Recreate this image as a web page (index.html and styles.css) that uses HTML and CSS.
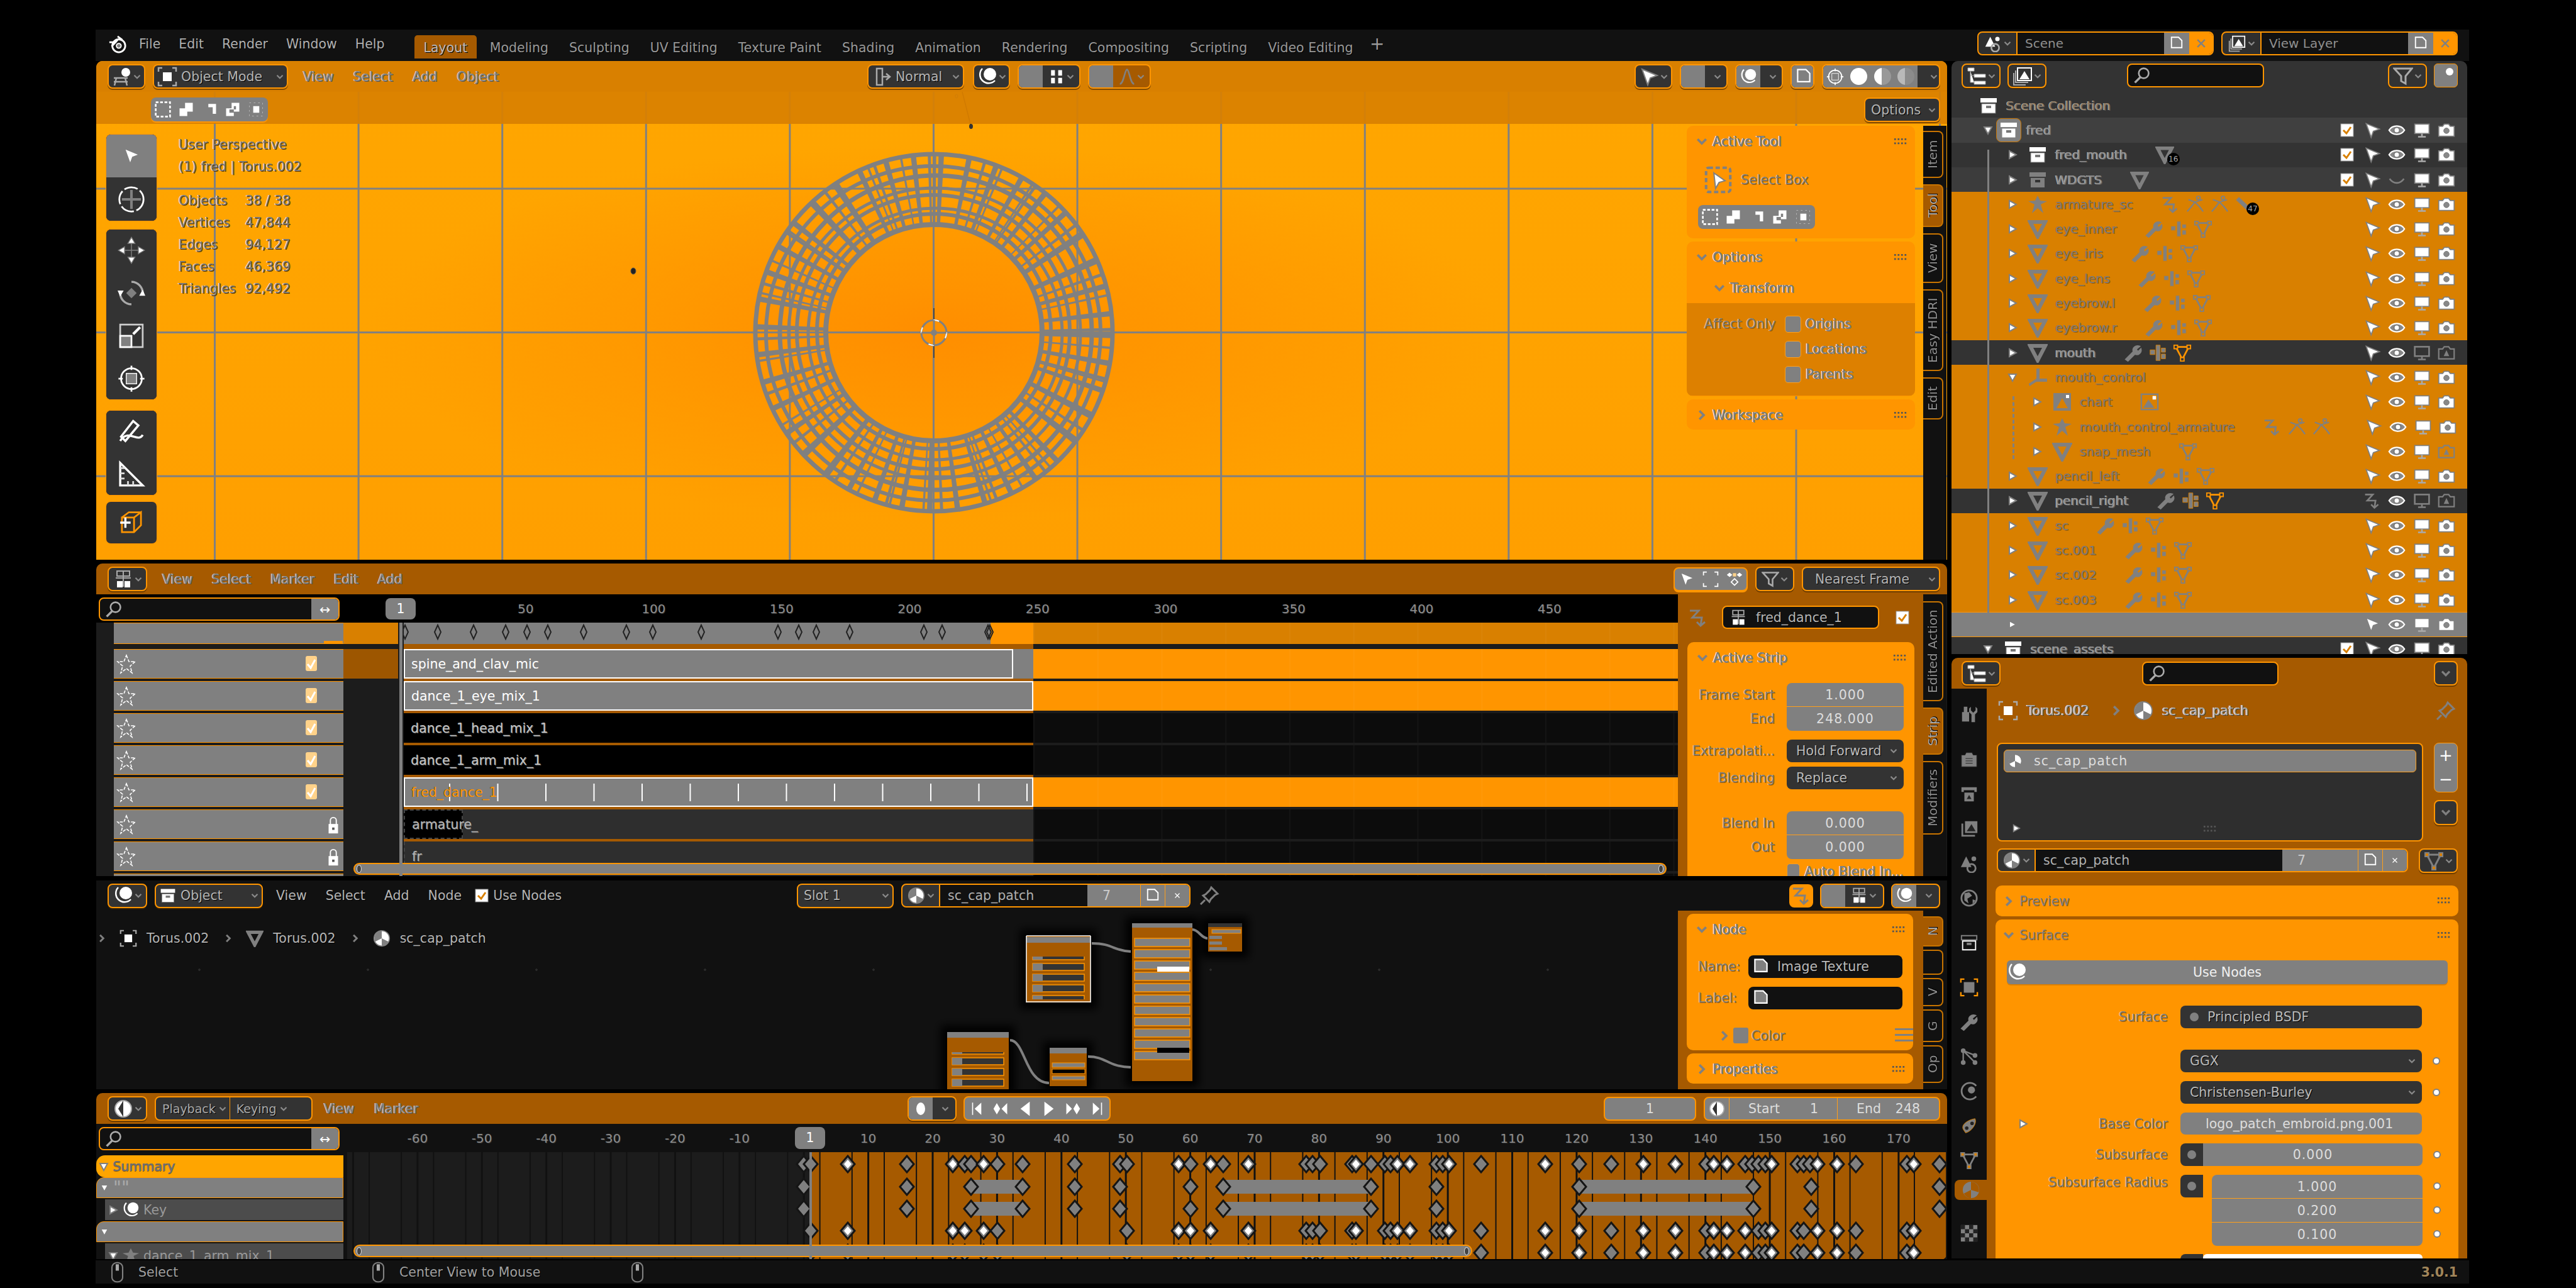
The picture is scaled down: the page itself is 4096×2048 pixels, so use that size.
FILE: index.html
```html
<!DOCTYPE html>
<html lang="en">
<head>
<meta charset="utf-8">
<title>Blender 3.0.1</title>
<link rel="stylesheet" href="styles.css">
</head>
<body>
<svg class="defs" width="0" height="0">
  <defs>
    <symbol id="logo" viewBox="0 0 32 32"><circle cx="18" cy="19" r="11" fill="none" stroke="#fff" stroke-width="3"/><circle cx="18" cy="19" r="4" fill="#808080" stroke="#fff" stroke-width="2"/><path d="M2 13H14M6 20L16 9M16 3L24 9" stroke="#fff" stroke-width="3" fill="none"/></symbol>
    <symbol id="v" viewBox="0 0 16 16"><path d="M2 5L8 11L14 5" fill="none" stroke="#8a8a8a" stroke-width="3"/></symbol>
    <symbol id="chev" viewBox="0 0 24 24"><path d="M3 7L12 16L21 7" fill="none" stroke="#808080" stroke-width="5"/></symbol>
    <symbol id="chevr" viewBox="0 0 24 24"><path d="M7 3L16 12L7 21" fill="none" stroke="#808080" stroke-width="5"/></symbol>
    <symbol id="arr" viewBox="0 0 16 16"><path d="M3 2L14 8L3 14Z" fill="#fff" stroke="#808080" stroke-width="2"/></symbol>
    <symbol id="arrd" viewBox="0 0 16 16"><path d="M2 3L14 3L8 14Z" fill="#fff" stroke="#808080" stroke-width="2"/></symbol>
    <symbol id="sel" viewBox="0 0 32 32"><path d="M5 4L29 14L18 18L14 29Z" fill="#fff" stroke="#808080" stroke-width="2"/></symbol>
    <symbol id="selbox" viewBox="0 0 32 32"><rect x="2" y="2" width="28" height="28" rx="3" fill="none" stroke="#808080" stroke-width="3" stroke-dasharray="5 3"/><path d="M11 8L24 17L17 19L13 26Z" fill="#fff" stroke="#808080" stroke-width="1.5"/></symbol>
    <symbol id="eye" viewBox="0 0 32 32"><path d="M2 16C8 6 24 6 30 16C24 26 8 26 2 16Z" fill="#888" stroke="#fff" stroke-width="2.5"/><circle cx="16" cy="16" r="5" fill="#fff" stroke="#777" stroke-width="2"/></symbol>
    <symbol id="eyec" viewBox="0 0 32 32"><path d="M3 14C10 24 22 24 29 14" fill="none" stroke="#808080" stroke-width="3"/></symbol>
    <symbol id="mon" viewBox="0 0 32 32"><rect x="3" y="5" width="26" height="17" fill="#fff" stroke="#808080" stroke-width="2"/><path d="M16 22V27M9 28H23" stroke="#aaa" stroke-width="3"/></symbol>
    <symbol id="mond" viewBox="0 0 32 32"><rect x="3" y="5" width="26" height="17" fill="#333" stroke="#808080" stroke-width="3"/><path d="M16 22V27M9 28H23" stroke="#808080" stroke-width="3"/></symbol>
    <symbol id="cam" viewBox="0 0 32 32"><path d="M2 9H9L12 5H20L23 9H30V27H2Z" fill="#fff" stroke="#808080" stroke-width="2"/><circle cx="16" cy="17" r="5" fill="#888" stroke="#777"/></symbol>
    <symbol id="camd" viewBox="0 0 32 32"><path d="M2 9H9L12 5H20L23 9H30V27H2Z" fill="none" stroke="#808080" stroke-width="2.5"/><path d="M16 11L21 22H11Z" fill="#808080"/></symbol>
    <symbol id="chk" viewBox="0 0 24 24"><rect x="2" y="2" width="20" height="20" fill="#fff" stroke="#999"/><path d="M6 12L11 17L18 7" fill="none" stroke="#d98000" stroke-width="3"/></symbol>
    <symbol id="chk2" viewBox="0 0 18 24"><rect x="0" y="0" width="18" height="24" rx="3" fill="#ffd28a"/><path d="M3 13L8 19L15 6" fill="none" stroke="#fff" stroke-width="3"/></symbol>
    <symbol id="coll" viewBox="0 0 32 32"><rect x="3" y="4" width="26" height="7" fill="#fff"/><rect x="5" y="13" width="22" height="15" fill="#fff" stroke="#808080"/><rect x="12" y="16" width="8" height="4" fill="#777"/></symbol>
    <symbol id="collg" viewBox="0 0 32 32"><rect x="3" y="4" width="26" height="7" fill="#808080"/><rect x="5" y="13" width="22" height="15" fill="#808080"/><rect x="12" y="16" width="8" height="4" fill="#333"/></symbol>
    <symbol id="tri" viewBox="0 0 32 32"><path d="M4 5H28L16 28Z" fill="none" stroke="#808080" stroke-width="6"/></symbol>
    <symbol id="wr" viewBox="0 0 32 32"><path d="M3 27L16 14C14 8 20 2 27 5L21 10L24 14L29 9C31 16 24 21 19 18L7 30Z" fill="#808080" stroke="#808080" stroke-width="2"/></symbol>
    <symbol id="blk" viewBox="0 0 32 32"><path d="M3 11H11V19H3ZM13 3H20V29H13ZM22 8H29V15H22ZM22 18H29V26H22Z" fill="#808080" stroke="#d98000"/></symbol>
    <symbol id="md" viewBox="0 0 32 32"><path d="M5 6H27L16 27Z" fill="none" stroke="#808080" stroke-width="3"/><path d="M2 3H8V9H2ZM24 3H30V9H24ZM13 24H19V30H13Z" fill="#d98000" stroke="#808080" stroke-width="2"/></symbol>
    <symbol id="mdo" viewBox="0 0 32 32"><path d="M5 6H27L16 27Z" fill="none" stroke="#ff9500" stroke-width="3"/><path d="M2 3H8V9H2ZM24 3H30V9H24ZM13 24H19V30H13Z" fill="#333" stroke="#ff9500" stroke-width="2"/></symbol>
    <symbol id="arm" viewBox="0 0 32 32"><path d="M16 2L20 10L31 11L21 16L25 30L16 22L7 30L11 16L1 11L12 10Z" fill="#808080"/></symbol>
    <symbol id="act" viewBox="0 0 32 32"><path d="M3 5H17L7 16H22L20 29M14 23L20 29L27 23" fill="none" stroke="#808080" stroke-width="3"/></symbol>
    <symbol id="run" viewBox="0 0 32 32"><circle cx="22" cy="5" r="3" fill="none" stroke="#808080" stroke-width="2"/><path d="M5 8L16 12L24 20M16 12L10 20L3 28M24 20L30 28M16 12L29 8" fill="none" stroke="#808080" stroke-width="2.5"/></symbol>
    <symbol id="bone" viewBox="0 0 32 32"><path d="M5 6L24 24" stroke="#808080" stroke-width="7"/></symbol>
    <symbol id="emp" viewBox="0 0 32 32"><path d="M14 2H19V18H31V23H14L3 30L2 26L14 18Z" fill="#808080"/></symbol>
    <symbol id="img" viewBox="0 0 32 32"><rect x="2" y="3" width="28" height="26" fill="none" stroke="#808080" stroke-width="2.5"/><path d="M5 26L14 12L24 26Z" fill="#808080"/><rect x="21" y="6" width="6" height="6" fill="#fff"/></symbol>
    <symbol id="imgf" viewBox="0 0 32 32"><rect x="2" y="2" width="28" height="28" fill="#808080"/><path d="M7 26L16 10L25 26Z" fill="#d98000"/><rect x="22" y="5" width="5" height="5" fill="#fff"/></symbol>
    <symbol id="srch" viewBox="0 0 32 32"><circle cx="19" cy="12" r="9" fill="none" stroke="#aaa" stroke-width="3"/><path d="M13 19L3 29" stroke="#aaa" stroke-width="4"/></symbol>
    <symbol id="flt" viewBox="0 0 32 32"><path d="M2 4H30L20 16V28L13 24V16Z" fill="none" stroke="#aaa" stroke-width="3"/></symbol>
    <symbol id="shade" viewBox="0 0 32 32"><path d="M8 3H17V29H8ZM17 16H29M23 11L29 16L23 21" fill="none" stroke="#aaa" stroke-width="2.5"/></symbol>
    <symbol id="scn" viewBox="0 0 32 32"><path d="M11 4L20 22H2Z" fill="#fff"/><circle cx="24" cy="8" r="4" fill="#fff"/><circle cx="20" cy="24" r="7" fill="none" stroke="#aaa" stroke-width="3"/></symbol>
    <symbol id="lay" viewBox="0 0 32 32"><rect x="8" y="3" width="22" height="20" fill="#333" stroke="#fff" stroke-width="2"/><path d="M11 21L19 8L27 21Z" fill="#fff"/><path d="M5 7V26H25M2 11V30H21" fill="none" stroke="#aaa" stroke-width="2"/></symbol>
    <symbol id="doc" viewBox="0 0 32 32"><path d="M5 3H20L27 10V25H5Z" fill="#808080" stroke="#fff" stroke-width="2.5"/></symbol>
    <symbol id="x" viewBox="0 0 24 24"><path d="M5 5L19 19M19 5L5 19" stroke="#808080" stroke-width="3"/></symbol>
    <symbol id="xw" viewBox="0 0 24 24"><path d="M5 5L19 19M19 5L5 19" stroke="#fff" stroke-width="2.5"/></symbol>
    <symbol id="oltree" viewBox="0 0 32 32"><path d="M2 3H12V8H2ZM12 13H30V18H12ZM12 24H30V29H12ZM6 8V26H12M6 15H12" fill="#fff" stroke="#aaa"/></symbol>
    <symbol id="sphere" viewBox="0 0 32 32"><circle cx="16" cy="16" r="14" fill="#fff" stroke="#808080" stroke-width="2"/><path d="M16 2A14 14 0 0 0 4 22L16 16ZM16 16L28 22A14 14 0 0 1 16 30Z" fill="#808080"/></symbol>
    <symbol id="objm" viewBox="0 0 32 32"><path d="M2 8V2H8M24 2H30V8M30 24V30H24M8 30H2V24" fill="none" stroke="#aaa" stroke-width="2.5"/><rect x="9" y="9" width="14" height="14" fill="#fff"/></symbol>
    <symbol id="pin" viewBox="0 0 32 32"><path d="M19 3L29 13L25 15L18 22L16 26L6 16L10 14L17 7ZM9 23L2 30" fill="none" stroke="#808080" stroke-width="3"/></symbol>
    <symbol id="mouse" viewBox="0 0 24 40"><rect x="2" y="2" width="20" height="36" rx="9" fill="none" stroke="#808080" stroke-width="2.5"/><rect x="9" y="5" width="6" height="12" fill="#aaa"/></symbol>
    <symbol id="grip" viewBox="0 0 24 12"><path d="M1 0h3v3h-3zM7 0h3v3h-3zM13 0h3v3h-3zM19 0h3v3h-3zM1 7h3v3h-3zM7 7h3v3h-3zM13 7h3v3h-3zM19 7h3v3h-3z" fill="#555"/></symbol>
    <symbol id="star" viewBox="0 0 32 32"><path d="M16 2L20 12H30L22 19L25 30L16 23L7 30L10 19L2 12H12Z" fill="none" stroke="#fff" stroke-width="1.6" stroke-dasharray="5 2"/></symbol>
    <symbol id="lock" viewBox="0 0 20 32"><path d="M5 14V7A5 5 0 0 1 15 7V14" fill="none" stroke="#fff" stroke-width="2"/><rect x="2" y="13" width="16" height="16" fill="#fff"/><rect x="8" y="19" width="4" height="4" fill="#555"/></symbol>
    <symbol id="nla" viewBox="0 0 32 32"><path d="M6 3H26V11H6ZM4 14H28M16 3V28" fill="none" stroke="#aaa" stroke-width="2"/><rect x="6" y="19" width="9" height="10" fill="#fff"/><rect x="18" y="19" width="9" height="10" fill="#fff"/></symbol>
    <symbol id="tlclock" viewBox="0 0 32 32"><circle cx="16" cy="16" r="13" fill="#fff" stroke="#aaa" stroke-width="2"/><path d="M16 3L8 16L16 29Z" fill="#333"/></symbol>
    <symbol id="nodeic" viewBox="0 0 32 32"><path d="M8 3A13 13 0 1 0 28 22" fill="none" stroke="#fff" stroke-width="2.5"/><circle cx="20" cy="12" r="10" fill="#fff"/></symbol>
    <symbol id="v3d" viewBox="0 0 32 32"><circle cx="22" cy="9" r="7" fill="#fff"/><path d="M3 18H25M7 18L4 30M21 18L24 30M3 24H25" fill="none" stroke="#aaa" stroke-width="2.5"/></symbol>
    <symbol id="box" viewBox="0 0 32 32"><rect x="3" y="3" width="26" height="26" fill="none" stroke="#fff" stroke-width="3" stroke-dasharray="5 3"/></symbol>
    <symbol id="corners" viewBox="0 0 32 32"><path d="M3 9V3H9M23 3H29V9M29 23V29H23M9 29H3V23" fill="none" stroke="#fff" stroke-width="2"/></symbol>
    <symbol id="k2" viewBox="0 0 32 32"><path d="M2 8L7 4L12 8L7 12ZM20 8L25 4L30 8L25 12Z" fill="#fff"/><rect x="13" y="5" width="6" height="6" fill="#ffd28a"/><path d="M16 15L22 21L16 27L10 21Z" fill="none" stroke="#fff" stroke-width="2"/></symbol>
    <symbol id="snap4" viewBox="0 0 32 32"><path d="M6 4H13V14H6ZM19 4H26V14H19ZM6 18H13V28H6ZM19 18H26V28H19Z" fill="#fff"/></symbol>
    <symbol id="fall" viewBox="0 0 32 32"><path d="M3 29C10 29 12 3 16 3C20 3 22 29 29 29" fill="none" stroke="#808080" stroke-width="3"/></symbol>
    <symbol id="b1" viewBox="0 0 32 32"><path d="M14 4H28V20H18V28H4V14H14Z" fill="#fff"/></symbol>
    <symbol id="b2" viewBox="0 0 32 32"><path d="M14 6H28V24H22V12H14Z" fill="#fff"/></symbol>
    <symbol id="b3" viewBox="0 0 32 32"><path d="M14 4H28V20H18V28H4V14H14ZM18 10V16H10V22H18V16H22V10Z" fill="#fff" fill-rule="evenodd"/></symbol>
    <symbol id="b4" viewBox="0 0 32 32"><rect x="11" y="10" width="11" height="12" fill="#fff"/><rect x="4" y="4" width="24" height="24" fill="none" stroke="#bbb" stroke-dasharray="3 5"/></symbol>
    <symbol id="t-cur" viewBox="0 0 32 32"><circle cx="16" cy="16" r="14" fill="none" stroke="#fff" stroke-width="2" stroke-dasharray="16 3"/><path d="M16 5V27M5 16H27" stroke="#808080" stroke-width="3"/></symbol>
    <symbol id="t-mv" viewBox="0 0 32 32"><path d="M16 1L20 8H12ZM16 31L12 24H20ZM1 16L8 12V20ZM31 16L24 20V12ZM16 8V24M8 16H24" fill="#fff" stroke="#808080"/></symbol>
    <symbol id="t-rot" viewBox="0 0 32 32"><path d="M16 3A13 13 0 0 1 29 16M16 29A13 13 0 0 1 3 16" fill="none" stroke="#aaa" stroke-width="2.5"/><path d="M16 10L22 16L16 22L10 16Z" fill="#808080"/><path d="M29 12L32 19H25ZM3 20L0 13H7Z" fill="#fff"/></symbol>
    <symbol id="t-sc" viewBox="0 0 32 32"><rect x="3" y="3" width="26" height="26" fill="none" stroke="#ccc" stroke-width="2"/><rect x="3" y="16" width="13" height="13" fill="#808080" stroke="#fff" stroke-width="2"/><path d="M18 14L26 6" stroke="#fff" stroke-width="3"/></symbol>
    <symbol id="t-tf" viewBox="0 0 32 32"><circle cx="16" cy="16" r="12" fill="none" stroke="#fff" stroke-width="2"/><rect x="10" y="10" width="12" height="12" fill="#808080" stroke="#fff"/><path d="M16 1V6M16 26V31M1 16H6M26 16H31" stroke="#fff" stroke-width="2"/></symbol>
    <symbol id="t-an" viewBox="0 0 32 32"><path d="M3 27C12 12 24 30 29 20M4 22L18 4L24 9L9 27Z" fill="none" stroke="#fff" stroke-width="2.5"/></symbol>
    <symbol id="t-me" viewBox="0 0 32 32"><path d="M3 29V3L29 29Z" fill="none" stroke="#fff" stroke-width="2.5"/><path d="M3 9H8M3 15H8M3 21H8M12 29V24M18 29V24" stroke="#ddd" stroke-width="2"/></symbol>
    <symbol id="t-add" viewBox="0 0 32 32"><path d="M5 10L19 10L27 4V19L19 27H5ZM5 10L13 4H27M19 10V27" fill="none" stroke="#ff9500" stroke-width="2"/><path d="M3 16H15M9 10V22" stroke="#fff" stroke-width="2.5"/></symbol>
    <symbol id="tp1" viewBox="0 0 24 32"><path d="M3 4H5V28H3ZM21 4V28L8 16Z" fill="#fff"/></symbol>
    <symbol id="tp2" viewBox="0 0 32 32"><path d="M8 4L15 16L8 28L1 16ZM30 4V28L18 16Z" fill="#fff"/></symbol>
    <symbol id="tp3" viewBox="0 0 24 32"><path d="M21 2V30L3 16Z" fill="#fff"/></symbol>
    <symbol id="tp4" viewBox="0 0 24 32"><path d="M3 2V30L21 16Z" fill="#fff"/></symbol>
    <symbol id="tp5" viewBox="0 0 32 32"><path d="M24 4L31 16L24 28L17 16ZM2 4V28L14 16Z" fill="#fff"/></symbol>
    <symbol id="tp6" viewBox="0 0 24 32"><path d="M19 4H21V28H19ZM3 4V28L16 16Z" fill="#fff"/></symbol>
    <symbol id="p-tool" viewBox="0 0 32 32"><path d="M7 3H13V12H16V28H4V12H7ZM19 3V9L23 13L27 9V3L30 6V12L26 16V29H20V16L16 12V6Z" fill="#808080"/></symbol>
    <symbol id="p-rnd" viewBox="0 0 32 32"><path d="M3 8H9L11 4H21L23 8H29V28H3ZM10 14H22M10 18H22M10 22H22" fill="#808080" stroke="#222" stroke-width="1"/></symbol>
    <symbol id="p-out" viewBox="0 0 32 32"><path d="M3 4H29V12L25 12V9H7V12H3ZM8 13H24V28H8Z" fill="#808080"/><path d="M12 24L16 17L20 24Z" fill="#222"/></symbol>
    <symbol id="p-lay" viewBox="0 0 32 32"><path d="M9 3H30V23H9ZM6 7V26H26V29H3V7Z" fill="#808080"/><path d="M12 20L20 8L27 20Z" fill="#222"/></symbol>
    <symbol id="p-scn" viewBox="0 0 32 32"><path d="M11 4L20 22H2Z" fill="#808080"/><circle cx="24" cy="8" r="4" fill="#808080"/><circle cx="20" cy="24" r="7" fill="none" stroke="#808080" stroke-width="3"/></symbol>
    <symbol id="p-wld" viewBox="0 0 32 32"><circle cx="16" cy="16" r="13" fill="none" stroke="#808080" stroke-width="3"/><path d="M8 8L16 6L21 12L13 17L15 25L8 20ZM22 18L27 20L22 26Z" fill="#808080"/></symbol>
    <symbol id="p-col" viewBox="0 0 32 32"><path d="M3 4H29V11H3Z" fill="none" stroke="#808080" stroke-width="2"/><path d="M5 13H27V28H5Z" fill="none" stroke="#fff" stroke-width="2"/><rect x="12" y="16" width="8" height="4" fill="#808080"/></symbol>
    <symbol id="p-obj" viewBox="0 0 32 32"><path d="M2 8V2H8M24 2H30V8M30 24V30H24M8 30H2V24" fill="none" stroke="#ff9500" stroke-width="2.5"/><rect x="7" y="7" width="18" height="18" fill="#808080"/></symbol>
    <symbol id="p-part" viewBox="0 0 32 32"><path d="M6 6L26 14M6 6L6 26M6 6L26 26" stroke="#808080" stroke-width="2.5"/><circle cx="6" cy="6" r="4" fill="#808080"/><circle cx="26" cy="14" r="4" fill="#808080"/><circle cx="6" cy="26" r="4" fill="#808080"/><circle cx="26" cy="26" r="4" fill="#808080"/></symbol>
    <symbol id="p-phys" viewBox="0 0 32 32"><path d="M28 7A14 14 0 1 0 28 25" fill="none" stroke="#808080" stroke-width="3"/><circle cx="20" cy="14" r="6" fill="#808080"/></symbol>
    <symbol id="p-cons" viewBox="0 0 32 32"><path d="M6 22C2 14 14 6 26 4C30 12 20 26 10 28Z" fill="#808080" stroke="#d98000"/><circle cx="12" cy="20" r="3" fill="#222"/><circle cx="21" cy="12" r="3" fill="#222"/></symbol>
    <symbol id="p-mat" viewBox="0 0 32 32"><circle cx="16" cy="16" r="14" fill="#808080"/><path d="M16 16V2A14 14 0 0 1 29 20ZM16 16L4 22A14 14 0 0 0 16 30Z" fill="#a65a00"/></symbol>
    <symbol id="p-tex" viewBox="0 0 32 32"><rect x="2" y="2" width="28" height="28" fill="#808080"/><path d="M2 2H9V9H2ZM16 2H23V9H16ZM9 9H16V16H9ZM23 9H30V16H23ZM2 16H9V23H2ZM16 16H23V23H16ZM9 23H16V30H9ZM23 23H30V30H23Z" fill="#222"/></symbol>
    <g id="k"><path d="M0 -13L11 0L0 13L-11 0Z" fill="#808080" stroke="#151515" stroke-width="3"/></g>
    <g id="w"><path d="M0 -13L11 0L0 13L-11 0Z" fill="#808080" stroke="#151515" stroke-width="3"/><path d="M0 -7L6 0L0 7L-6 0Z" fill="#fff"/></g>
    <g id="d"><path d="M0 -11L5 0L0 11L-5 0Z" fill="none" stroke="#222" stroke-width="2"/></g>
    <g id="kr1">
      <use href="#k" x="1278"/><use href="#k" x="1289"/><use href="#w" x="1348"/><use href="#k" x="1442"/><use href="#w" x="1515"/><use href="#k" x="1534"/><use href="#k" x="1544"/><use href="#w" x="1564"/><use href="#k" x="1586"/><use href="#k" x="1626"/><use href="#k" x="1709"/><use href="#k" x="1781"/><use href="#k" x="1792"/><use href="#w" x="1874"/><use href="#k" x="1893"/><use href="#w" x="1925"/><use href="#k" x="1945"/><use href="#w" x="1985"/><use href="#k" x="2077"/><use href="#k" x="2087"/><use href="#k" x="2099"/><use href="#k" x="2150"/><use href="#w" x="2156"/><use href="#k" x="2180"/><use href="#k" x="2202"/><use href="#k" x="2211"/><use href="#w" x="2222"/><use href="#w" x="2242"/><use href="#k" x="2284"/><use href="#k" x="2294"/><use href="#w" x="2304"/><use href="#k" x="2355"/><use href="#w" x="2457"/><use href="#k" x="2511"/><use href="#k" x="2562"/><use href="#w" x="2613"/><use href="#w" x="2664"/><use href="#k" x="2713"/><use href="#w" x="2725"/><use href="#w" x="2746"/><use href="#k" x="2775"/><use href="#k" x="2786"/><use href="#k" x="2796"/><use href="#k" x="2807"/><use href="#w" x="2817"/><use href="#k" x="2858"/><use href="#k" x="2868"/><use href="#k" x="2878"/><use href="#w" x="2890"/><use href="#w" x="2921"/><use href="#k" x="2951"/><use href="#k" x="3032"/><use href="#w" x="3043"/><use href="#k" x="3084"/>
    </g>
    <g id="kr2">
      <rect x="1544" y="-11" width="82" height="22" fill="#808080"/><rect x="1945" y="-11" width="235" height="22" fill="#808080"/><rect x="2511" y="-11" width="277" height="22" fill="#808080"/>
      <use href="#k" x="1278"/><use href="#k" x="1442"/><use href="#k" x="1544"/><use href="#k" x="1626"/><use href="#k" x="1709"/><use href="#k" x="1781"/><use href="#k" x="1893"/><use href="#k" x="1945"/><use href="#k" x="2180"/><use href="#k" x="2284"/><use href="#k" x="2511"/><use href="#k" x="2788"/><use href="#k" x="2880"/><use href="#k" x="3084"/>
    </g>
    <g id="kr4">
      <use href="#k" x="1289"/><use href="#w" x="1348"/><use href="#w" x="1515"/><use href="#w" x="1534"/><use href="#w" x="1564"/><use href="#k" x="1586"/><use href="#k" x="1792"/><use href="#w" x="1874"/><use href="#w" x="1893"/><use href="#w" x="1925"/><use href="#w" x="1985"/><use href="#k" x="2077"/><use href="#k" x="2087"/><use href="#k" x="2099"/><use href="#k" x="2150"/><use href="#w" x="2156"/><use href="#k" x="2202"/><use href="#k" x="2211"/><use href="#w" x="2222"/><use href="#w" x="2242"/><use href="#k" x="2284"/><use href="#k" x="2294"/><use href="#w" x="2304"/><use href="#k" x="2355"/><use href="#w" x="2457"/><use href="#w" x="2511"/><use href="#k" x="2562"/><use href="#w" x="2613"/><use href="#w" x="2664"/><use href="#k" x="2713"/><use href="#w" x="2725"/><use href="#w" x="2746"/><use href="#w" x="2775"/><use href="#k" x="2796"/><use href="#k" x="2807"/><use href="#w" x="2817"/><use href="#k" x="2858"/><use href="#k" x="2868"/><use href="#w" x="2890"/><use href="#w" x="2921"/><use href="#k" x="2951"/><use href="#k" x="3032"/><use href="#w" x="3043"/>
    </g>
    <pattern id="bars" x="1802" y="1490" width="92" height="18" patternUnits="userSpaceOnUse"><rect x="2" y="2" width="88" height="13" fill="#808080" stroke="#ff9500" stroke-width="1.5"/></pattern>
    <pattern id="bars2" x="1640" y="1530" width="86" height="17" patternUnits="userSpaceOnUse"><rect x="2" y="2" width="82" height="11" fill="#333" stroke="#ff9500" stroke-width="1.5"/><rect x="2" y="2" width="16" height="11" fill="#808080"/></pattern>
    <pattern id="bars3" x="1512" y="1680" width="86" height="17" patternUnits="userSpaceOnUse"><rect x="2" y="2" width="82" height="11" fill="#333" stroke="#ff9500" stroke-width="1.5"/><rect x="2" y="2" width="16" height="11" fill="#808080"/></pattern>
    <filter id="blur" x="-40%" y="-40%" width="180%" height="180%"><feGaussianBlur stdDeviation="7"/></filter>
  </defs>
</svg>

<div class="app">
  <header class="topbar">
    <svg class="logo"><use href="#logo"/></svg>
    <nav class="topmenu"><span>File</span><span>Edit</span><span>Render</span><span>Window</span><span>Help</span></nav>
    <nav class="tabs">
      <span class="tab on">Layout</span><span class="tab">Modeling</span><span class="tab">Sculpting</span><span class="tab">UV Editing</span><span class="tab">Texture Paint</span><span class="tab">Shading</span><span class="tab">Animation</span><span class="tab">Rendering</span><span class="tab">Compositing</span><span class="tab">Scripting</span><span class="tab">Video Editing</span><span class="tab plus">+</span>
    </nav>
    <div class="scenes">
      <div class="idblock"><span class="id-ic"><svg class="i28"><use href="#scn"/></svg><svg class="i12"><use href="#v"/></svg></span><span class="id-name">Scene</span><span class="id-new"><svg class="i24"><use href="#doc"/></svg></span><span class="id-x"><svg class="i20"><use href="#x"/></svg></span></div>
      <div class="idblock"><span class="id-ic"><svg class="i28"><use href="#lay"/></svg><svg class="i12"><use href="#v"/></svg></span><span class="id-name">View Layer</span><span class="id-new"><svg class="i24"><use href="#doc"/></svg></span><span class="id-x"><svg class="i20"><use href="#x"/></svg></span></div>
    </div>
  </header>

  <div class="main">
    <div class="leftcol">

      <section class="viewport">
        <svg class="torus" viewBox="153 97 2942 793">
          <path d="M1530 146L1544 201" stroke="#5a3000" stroke-width="1.5"/><ellipse cx="1544" cy="201" rx="3" ry="4" fill="#333"/><ellipse cx="1007" cy="431" rx="4" ry="5" fill="#222" stroke="#555"/><ellipse cx="1521" cy="153" rx="2" ry="3" fill="none" stroke="#555"/>
          <g fill="none" stroke="#808080">
            <circle cx="1485" cy="529" r="284" stroke-width="7"/>
            <circle cx="1485" cy="529" r="172" stroke-width="8"/>
            <ellipse cx="1485" cy="527" rx="186" ry="187" stroke-width="6"/>
            <ellipse cx="1487" cy="531" rx="202" ry="200" stroke-width="5"/>
            <ellipse cx="1484" cy="528" rx="217" ry="218" stroke-width="6"/>
            <ellipse cx="1486" cy="530" rx="232" ry="231" stroke-width="5"/>
            <ellipse cx="1488" cy="529" rx="248" ry="250" stroke-width="7"/>
            <ellipse cx="1484" cy="530" rx="266" ry="266" stroke-width="6"/>
            <circle cx="1485" cy="529" r="228" stroke-width="114" stroke-dasharray="7 29"/>
            <circle cx="1485" cy="529" r="228" stroke-width="114" stroke-dasharray="4 68" stroke-dashoffset="14"/>
            <circle cx="1485" cy="529" r="228" stroke-width="114" stroke-dasharray="3 41" stroke-dashoffset="26"/>
          </g>
          <path d="M1485 490V569" stroke="#333" stroke-width="1.5"/>
          <circle cx="1485" cy="529" r="20" fill="#ff9200" stroke="#808080" stroke-width="3"/>
          <circle cx="1485" cy="529" r="20" fill="none" stroke="#fff" stroke-width="2" stroke-dasharray="9 22"/>
          <path d="M1465 529H1505M1485 509V549" stroke="#808080" stroke-width="3"/>
          <circle cx="1485" cy="529" r="5" fill="#808080"/>
        </svg>
        <div class="hdr vp-hdr">
          <div class="hdr-l hl-vp">
            <span class="btn w60"><svg class="i32"><use href="#v3d"/></svg><svg class="i12"><use href="#v"/></svg></span>
            <span class="btn w215 ml12"><svg class="i32"><use href="#objm"/></svg><span class="btxt">Object Mode</span><svg class="i12 push"><use href="#v"/></svg></span>
            <nav class="menu"><span>View</span><span>Select</span><span>Add</span><span>Object</span></nav>
          </div>
          <span class="btn w154"><svg class="i32"><use href="#shade"/></svg><span class="btxt">Normal</span><svg class="i12 push"><use href="#v"/></svg></span>
          <span class="btn w59 ml14"><svg class="i32"><use href="#nodeic"/></svg><svg class="i12"><use href="#v"/></svg></span>
          <span class="btn w100 ml12 split"><span class="g38"></span><svg class="i28"><use href="#snap4"/></svg><svg class="i12"><use href="#v"/></svg></span>
          <span class="btn w100 ml12 split rust"><span class="g38"></span><svg class="i28"><use href="#fall"/></svg><svg class="i12"><use href="#v"/></svg></span>
          <div class="hdr-r">
            <span class="btn w60"><svg class="i32"><use href="#sel"/></svg><svg class="i12"><use href="#v"/></svg></span>
            <span class="btn w76 split"><span class="g38"><svg class="i28"><use href="#act"/></svg></span><svg class="i12 mid"><use href="#v"/></svg></span>
            <span class="btn w76 split"><span class="g38"><svg class="i28"><use href="#nodeic"/></svg></span><svg class="i12 mid"><use href="#v"/></svg></span>
            <span class="btn w38 split"><span class="g38"><svg class="i28"><use href="#doc"/></svg></span></span>
            <span class="btn w188 split"><span class="g150"><svg class="i28"><use href="#t-tf"/></svg><i class="disc"></i><i class="disc half"></i><i class="disc half dim"></i></span><svg class="i12 mid"><use href="#v"/></svg></span>
          </div>
        </div>
        <div class="vp-tool">
          <span class="btn-row w186"><svg class="i28"><use href="#box"/></svg><svg class="i28"><use href="#b1"/></svg><svg class="i28"><use href="#b2"/></svg><svg class="i28"><use href="#b3"/></svg><svg class="i28"><use href="#b4"/></svg></span>
          <span class="btn w121 opt"><span class="btxt">Options</span><svg class="i12 push"><use href="#v"/></svg></span>
        </div>
        <div class="vp-body">
          <aside class="toolbar">
            <div class="tgroup g1"><span class="tool on"><svg class="i32"><use href="#sel"/></svg></span><span class="tool"><svg class="i44"><use href="#t-cur"/></svg></span></div>
            <div class="tgroup"><span class="tool"><svg class="i44"><use href="#t-mv"/></svg></span><span class="tool"><svg class="i44"><use href="#t-rot"/></svg></span><span class="tool"><svg class="i44"><use href="#t-sc"/></svg></span><span class="tool"><svg class="i44"><use href="#t-tf"/></svg></span></div>
            <div class="tgroup g2"><span class="tool"><svg class="i44"><use href="#t-an"/></svg></span><span class="tool"><svg class="i44"><use href="#t-me"/></svg></span></div>
            <div class="tgroup g3"><span class="tool"><svg class="i44"><use href="#t-add"/></svg></span></div>
          </aside>
          <div class="info">
            <p>User Perspective</p>
            <p>(1) fred | Torus.002</p>
            <dl class="stats">
              <dt>Objects</dt><dd>38 / 38</dd>
              <dt>Vertices</dt><dd>47,844</dd>
              <dt>Edges</dt><dd>94,127</dd>
              <dt>Faces</dt><dd>46,369</dd>
              <dt>Triangles</dt><dd>92,492</dd>
            </dl>
          </div>
          <div class="npanels">
            <section class="panel at">
              <h3 class="ph"><svg class="i18"><use href="#chev"/></svg><span>Active Tool</span><svg class="grip"><use href="#grip"/></svg></h3>
              <div class="tool-name"><svg class="i44"><use href="#selbox"/></svg><span class="tdark">Select Box</span></div>
              <span class="btn-row w186 ar-row"><svg class="i28"><use href="#box"/></svg><svg class="i28"><use href="#b1"/></svg><svg class="i28"><use href="#b2"/></svg><svg class="i28"><use href="#b3"/></svg><svg class="i28"><use href="#b4"/></svg></span>
            </section>
            <section class="panel op">
              <h3 class="ph"><svg class="i18"><use href="#chev"/></svg><span>Options</span><svg class="grip"><use href="#grip"/></svg></h3>
              <h4 class="ph sub"><svg class="i18"><use href="#chev"/></svg><span>Transform</span></h4>
              <div class="subbody">
                <span class="lab-aff tdark">Affect Only</span>
                <div class="checks"><label class="ck"><i></i>Origins</label><label class="ck"><i></i>Locations</label><label class="ck"><i></i>Parents</label></div>
              </div>
            </section>
            <section class="panel ws">
              <h3 class="ph"><svg class="i18"><use href="#chevr"/></svg><span>Workspace</span><svg class="grip"><use href="#grip"/></svg></h3>
            </section>
          </div>
          <div class="vtabs vt-vp"><span class="vt t75">Item</span><span class="vt t68 on">Tool</span><span class="vt t79">View</span><span class="vt t130">Easy HDRI</span><span class="vt t67">Edit</span></div>
        </div>
      </section>

      <section class="nla">
        <div class="hdr rust-h">
          <span class="btn w63"><svg class="i32"><use href="#nla"/></svg><svg class="i12"><use href="#v"/></svg></span>
          <nav class="menu m-nla"><span>View</span><span>Select</span><span>Marker</span><span>Edit</span><span>Add</span></nav>
          <div class="hdr-r">
            <span class="btn-row w118 tall"><svg class="i28"><use href="#sel"/></svg><svg class="i28"><use href="#corners"/></svg><svg class="i28"><use href="#k2"/></svg></span>
            <span class="btn w62"><svg class="i28"><use href="#flt"/></svg><svg class="i12"><use href="#v"/></svg></span>
            <span class="btn w220"><span class="btxt ctr">Nearest Frame</span><svg class="i12 push"><use href="#v"/></svg></span>
          </div>
        </div>
        <div class="nla-body">
          <div class="nla-main">
            <div class="ruler-row">
              <div class="searchbox sb-nla"><svg class="i28"><use href="#srch"/></svg><span class="sb-t">&#8596;</span></div>
              <div class="ruler rl-nla"><span>50</span><span>100</span><span>150</span><span>200</span><span>250</span><span>300</span><span>350</span><span>400</span><span>450</span></div>
              <span class="frame fr-nla">1</span>
            </div>
            <div class="tracks">
              <div class="nrow n1"><span class="chan"><i class="ch-top"></i></span><span class="pre amb"></span><div class="strip s-key">
                <svg class="kfs" viewBox="641 988 1001 34"><g transform="translate(0 1003)"><use href="#d" x="643"/><use href="#d" x="695"/><use href="#d" x="752"/><use href="#d" x="803"/><use href="#d" x="837"/><use href="#d" x="870"/><use href="#d" x="927"/><use href="#d" x="995"/><use href="#d" x="1037"/><use href="#d" x="1114"/><use href="#d" x="1236"/><use href="#d" x="1269"/><use href="#d" x="1297"/><use href="#d" x="1350"/><use href="#d" x="1468"/><use href="#d" x="1497"/><use href="#d" x="1570"/><use href="#d" x="1573"/></g></svg>
              </div><span class="rest amb"></span></div>
              <div class="nrow"><span class="chan"><svg class="i32"><use href="#star"/></svg><svg class="ch-ck"><use href="#chk2"/></svg></span><span class="pre brn"></span><div class="strip gray"><span class="sbox sb-short">spine_and_clav_mic</span></div><span class="rest orng"></span></div>
              <div class="nrow"><span class="chan"><svg class="i32"><use href="#star"/></svg><svg class="ch-ck"><use href="#chk2"/></svg></span><span class="pre"></span><div class="strip gray"><span class="sbox">dance_1_eye_mix_1</span></div><span class="rest orng"></span></div>
              <div class="nrow"><span class="chan"><svg class="i32"><use href="#star"/></svg><svg class="ch-ck"><use href="#chk2"/></svg></span><span class="pre"></span><div class="strip blk"><span class="snm">dance_1_head_mix_1</span></div><span class="rest nblk"></span></div>
              <div class="nrow"><span class="chan"><svg class="i32"><use href="#star"/></svg><svg class="ch-ck"><use href="#chk2"/></svg></span><span class="pre"></span><div class="strip blk"><span class="snm">dance_1_arm_mix_1</span></div><span class="rest nblk"></span></div>
              <div class="nrow"><span class="chan"><svg class="i32"><use href="#star"/></svg><svg class="ch-ck"><use href="#chk2"/></svg></span><span class="pre"></span><div class="strip gray"><span class="sbox ticks snm-o">fred_dance_1</span></div><span class="rest orng"></span></div>
              <div class="nrow"><span class="chan"><svg class="i32"><use href="#star"/></svg><svg class="lck"><use href="#lock"/></svg></span><span class="pre"></span><div class="strip dk"><span class="dashed">armature_</span></div><span class="rest nblk"></span></div>
              <div class="nrow"><span class="chan"><svg class="i32"><use href="#star"/></svg><svg class="lck"><use href="#lock"/></svg></span><span class="pre"></span><div class="strip dk"><span class="dashed op2">fr</span></div><span class="rest nblk"></span></div>
              <div class="nrow"><span class="chan"></span><span class="pre"></span><div class="strip dk"></div><span class="rest nblk"></span></div>
              <div class="hscroll hs-nla"><i></i><i></i></div>
              <span class="playline pl-nla"></span>
            </div>
          </div>
          <aside class="side s-nla">
            <div class="nla-side-top"><svg class="i32"><use href="#act"/></svg><span class="namefield"><svg class="i28"><use href="#nla"/></svg>fred_dance_1</span><svg class="i24 ckb"><use href="#chk"/></svg></div>
            <section class="panel strip-p">
              <h3 class="ph"><svg class="i18"><use href="#chev"/></svg><span>Active Strip</span><svg class="grip"><use href="#grip"/></svg></h3>
              <div class="frow fr-first"><span class="tdark">Frame Start</span><span class="num top">1.000</span></div>
              <div class="frow fr-next"><span class="tdark">End</span><span class="num bot">248.000</span></div>
              <div class="frow fr-gap"><span class="tdark">Extrapolati...</span><span class="dd">Hold Forward<svg class="i12 push"><use href="#v"/></svg></span></div>
              <div class="frow fr-gap2"><span class="tdark">Blending</span><span class="dd">Replace<svg class="i12 push"><use href="#v"/></svg></span></div>
              <div class="frow fr-gap3"><span class="tdark">Blend In</span><span class="num top">0.000</span></div>
              <div class="frow fr-next"><span class="tdark">Out</span><span class="num bot">0.000</span></div>
              <div class="frow fr-last"><span></span><label class="ck ck2"><i></i>Auto Blend In...</label></div>
            </section>
          </aside>
          <div class="vtabs vt-nla"><span class="vt t159">Edited Action</span><span class="vt t75 on">Strip</span><span class="vt t117">Modifiers</span></div>
        </div>
      </section>

      <section class="nodeed">
        <div class="hdr nd-hdr">
          <div class="hdr-l hl-nd">
            <span class="btn w63"><svg class="i32"><use href="#nodeic"/></svg><svg class="i12"><use href="#v"/></svg></span>
            <span class="btn w172 ml12"><svg class="i28"><use href="#coll"/></svg><span class="btxt">Object</span><svg class="i12 push"><use href="#v"/></svg></span>
            <nav class="menu bright"><span>View</span><span>Select</span><span>Add</span><span>Node</span></nav>
            <label class="usenodes"><svg class="i24"><use href="#chk"/></svg>Use Nodes</label>
          </div>
          <span class="btn w154"><span class="btxt">Slot 1</span><svg class="i12 push"><use href="#v"/></svg></span>
          <span class="matblock"><span class="mb-ic"><svg class="i28"><use href="#sphere"/></svg><svg class="i12"><use href="#v"/></svg></span><span class="mb-name">sc_cap_patch</span><span class="mb-g">7</span><span class="mb-s"><svg class="i24"><use href="#doc"/></svg></span><span class="mb-s"><svg class="i12"><use href="#xw"/></svg></span></span>
          <svg class="i32 pin"><use href="#pin"/></svg>
          <div class="hdr-r">
            <span class="snapbtn"><svg class="i32"><use href="#act"/></svg></span>
            <span class="btn w102 split"><span class="g38"></span><svg class="i28"><use href="#nla"/></svg><svg class="i12"><use href="#v"/></svg></span>
            <span class="btn w78 split"><span class="g38"><svg class="i28"><use href="#nodeic"/></svg></span><svg class="i12 mid"><use href="#v"/></svg></span>
          </div>
        </div>
        <div class="nd-body">
          <div class="nd-canvas">
            <svg class="nodes" viewBox="153 1448 2515 284">
              <g fill="#000" filter="url(#blur)"><rect x="1622" y="1478" width="122" height="126"/><rect x="1790" y="1458" width="116" height="270"/><rect x="1911" y="1458" width="74" height="65"/><rect x="1496" y="1631" width="118" height="110"/><rect x="1659" y="1656" width="79" height="80"/></g>
              <g fill="none" stroke="#808080" stroke-width="4"><path d="M1736 1500C1770 1500 1770 1512 1798 1513"/><path d="M1896 1478C1906 1478 1910 1492 1920 1492"/><path d="M1606 1654C1630 1654 1630 1722 1668 1722"/><path d="M1730 1680C1760 1680 1760 1696 1798 1697"/></g>
              <rect x="1632" y="1488" width="102" height="106" fill="#a65a00"/><rect x="1632" y="1490" width="102" height="9" fill="#808080"/><path d="M1632 1488h102M1632 1593h102M1632 1488v106M1734 1488v106" stroke="#fff" stroke-width="1.5" fill="none"/><rect x="1640" y="1521" width="86" height="68" fill="url(#bars2)"/>
              <rect x="1800" y="1468" width="96" height="251" fill="#a65a00"/><rect x="1800" y="1468" width="96" height="7" fill="#808080"/><rect x="1802" y="1490" width="92" height="198" fill="url(#bars)"/><rect x="1840" y="1537" width="51" height="8" fill="#fff"/><rect x="1840" y="1666" width="51" height="8" fill="#000"/>
              <rect x="1921" y="1468" width="54" height="45" fill="#a65a00"/><rect x="1921" y="1468" width="54" height="6" fill="#333"/><rect x="1927" y="1478" width="46" height="6" fill="#808080" stroke="#ff9500"/><rect x="1923" y="1488" width="20" height="5" fill="#808080"/><rect x="1923" y="1497" width="20" height="5" fill="#808080"/><rect x="1923" y="1506" width="28" height="5" fill="#808080"/>
              <rect x="1506" y="1641" width="98" height="91" fill="#a65a00"/><rect x="1506" y="1641" width="98" height="9" fill="#808080"/><rect x="1512" y="1673" width="86" height="58" fill="url(#bars3)"/>
              <rect x="1669" y="1666" width="59" height="61" fill="#a65a00"/><rect x="1669" y="1666" width="59" height="9" fill="#808080"/><rect x="1673" y="1690" width="52" height="7" fill="#808080" stroke="#ff9500"/><rect x="1673" y="1700" width="52" height="7" fill="#000" stroke="#ff9500"/><rect x="1673" y="1711" width="52" height="6" fill="#808080" stroke="#ff9500"/>
            </svg>
            <div class="crumbs"><svg class="i14 cr-c0"><use href="#chevr"/></svg><svg class="i28"><use href="#objm"/></svg><span>Torus.002</span><svg class="i14 cr-c"><use href="#chevr"/></svg><svg class="i28"><use href="#tri"/></svg><span>Torus.002</span><svg class="i14 cr-c"><use href="#chevr"/></svg><svg class="i28"><use href="#sphere"/></svg><span>sc_cap_patch</span></div>
          </div>
          <aside class="side s-nd">
            <section class="panel nd-p">
              <h3 class="ph"><svg class="i18"><use href="#chev"/></svg><span>Node</span><svg class="grip"><use href="#grip"/></svg></h3>
              <div class="nfield nf1"><span class="tdark">Name:</span><span class="nf-in"><svg class="i28"><use href="#doc"/></svg>Image Texture</span></div>
              <div class="nfield nf2"><span class="tdark">Label:</span><span class="nf-in"><svg class="i28"><use href="#doc"/></svg></span></div>
              <div class="nd-color"><svg class="i18"><use href="#chevr"/></svg><i class="swatch"></i><span class="tdark">Color</span><span class="lines"></span></div>
            </section>
            <section class="panel nd-p2"><h3 class="ph"><svg class="i18"><use href="#chevr"/></svg><span>Properties</span><svg class="grip"><use href="#grip"/></svg></h3></section>
          </aside>
          <div class="vtabs vt-nd"><span class="vt t48 on">N</span><span class="vt t40"></span><span class="vt t45">V</span><span class="vt t52">G</span><span class="vt t60">Op</span></div>
        </div>
      </section>

      <section class="timeline">
        <div class="hdr rust-h">
          <div class="hdr-l hl-tl">
            <span class="btn w63"><svg class="i32"><use href="#tlclock"/></svg><svg class="i12"><use href="#v"/></svg></span>
            <span class="btn-pair ml12"><span>Playback<svg class="i12"><use href="#v"/></svg></span><span>Keying<svg class="i12"><use href="#v"/></svg></span></span>
            <nav class="menu m-tl"><span>View</span><span>Marker</span></nav>
          </div>
          <div class="tl-center">
            <span class="btn w78 split"><span class="g38"><i class="rec"></i></span><svg class="i12 mid"><use href="#v"/></svg></span>
            <span class="transport"><svg class="tp"><use href="#tp1"/></svg><svg class="tp"><use href="#tp2"/></svg><svg class="tp"><use href="#tp3"/></svg><svg class="tp"><use href="#tp4"/></svg><svg class="tp"><use href="#tp5"/></svg><svg class="tp"><use href="#tp6"/></svg></span>
          </div>
          <div class="hdr-r">
            <span class="curframe">1</span>
            <span class="range"><span class="r-ic"><svg class="i28"><use href="#tlclock"/></svg></span><span class="r-f rf1">Start<b>1</b></span><span class="r-f rf2">End<b>248</b></span></span>
          </div>
        </div>
        <div class="tl-body">
          <div class="tl-left">
            <div class="searchbox sb-tl"><svg class="i28"><use href="#srch"/></svg><span class="sb-t">&#8596;</span></div>
            <div class="tch summ"><svg class="i16"><use href="#arrd"/></svg><span>Summary</span></div>
            <div class="tch grp"><svg class="i16"><use href="#arrd"/></svg><span class="q">&quot;&quot;</span></div>
            <div class="tch sub1"><svg class="i16"><use href="#arr"/></svg><svg class="i28"><use href="#nodeic"/></svg><span>Key</span></div>
            <div class="tch grp"><svg class="i16"><use href="#arrd"/></svg><svg class="i28"><use href="#run"/></svg></div>
            <div class="tch sub1 lastc"><svg class="i16"><use href="#arrd"/></svg><svg class="i28"><use href="#arm"/></svg><span>dance_1_arm_mix_1</span></div>
          </div>
          <div class="tl-right">
            <div class="ruler rl-tl"><span>-60</span><span>-50</span><span>-40</span><span>-30</span><span>-20</span><span>-10</span><span></span><span>10</span><span>20</span><span>30</span><span>40</span><span>50</span><span>60</span><span>70</span><span>80</span><span>90</span><span>100</span><span>110</span><span>120</span><span>130</span><span>140</span><span>150</span><span>160</span><span>170</span></div>
            <div class="keys">
              <svg class="keysvg" viewBox="552 1831 2544 171">
                <use href="#kr1" y="1850"/><use href="#kr2" y="1886"/><use href="#kr2" y="1921"/><use href="#kr4" y="1956"/><use href="#kr4" y="1991"/>
              </svg>
              <div class="hscroll hs-tl"><i></i><i></i></div>
              <span class="playline pl-tl"></span>
            </div>
            <span class="frame fr-tl">1</span>
          </div>
        </div>
      </section>
    </div>

    <div class="rightcol">
      <section class="outliner">
        <div class="ol-hdr">
          <span class="btn w62"><svg class="i32"><use href="#oltree"/></svg><svg class="i12"><use href="#v"/></svg></span>
          <span class="btn w62 ml11"><svg class="i32"><use href="#lay"/></svg><svg class="i12"><use href="#v"/></svg></span>
          <span class="searchbox sb-ol"><svg class="i28"><use href="#srch"/></svg></span>
          <span class="btn w62 ml-auto"><svg class="i32"><use href="#flt"/></svg><svg class="i12"><use href="#v"/></svg></span>
          <span class="newcol"><b></b></span>
        </div>
        <div class="oltree">
          <span class="treeline"></span><span class="treeline2"></span>
          <div class="row r-root"><svg class="ob"><use href="#coll"/></svg><span class="nm">Scene Collection</span></div>
          <div class="row ind0 r-fred"><svg class="ar"><use href="#arrd"/></svg><span class="actbox"><svg class="ob"><use href="#coll"/></svg></span><span class="nm">fred</span><span class="sp"></span><span class="cols"><svg class="cl i24"><use href="#chk"/></svg><svg class="cl"><use href="#sel"/></svg><svg class="cl"><use href="#eye"/></svg><svg class="cl"><use href="#mon"/></svg><svg class="cl"><use href="#cam"/></svg></span></div>
          <div class="row ind1 r-dk"><svg class="ar"><use href="#arr"/></svg><svg class="ob"><use href="#coll"/></svg><span class="nm">fred_mouth</span><svg class="st ml44"><use href="#tri"/></svg><i class="badge">16</i><span class="sp"></span><span class="cols"><svg class="cl i24"><use href="#chk"/></svg><svg class="cl"><use href="#sel"/></svg><svg class="cl"><use href="#eye"/></svg><svg class="cl"><use href="#mon"/></svg><svg class="cl"><use href="#cam"/></svg></span></div>
          <div class="row ind1 r-wd"><svg class="ar"><use href="#arr"/></svg><svg class="ob"><use href="#collg"/></svg><span class="nm">WDGTS</span><svg class="st ml44"><use href="#tri"/></svg><span class="sp"></span><span class="cols"><svg class="cl i24"><use href="#chk"/></svg><svg class="cl"><use href="#sel"/></svg><svg class="cl"><use href="#eyec"/></svg><svg class="cl"><use href="#mon"/></svg><svg class="cl"><use href="#cam"/></svg></span></div>
          <div class="row ind1 s"><svg class="ar"><use href="#arr"/></svg><svg class="ob"><use href="#arm"/></svg><span class="nm">armature_sc</span><svg class="st ml44"><use href="#act"/></svg><svg class="st"><use href="#run"/></svg><svg class="st"><use href="#run"/></svg><svg class="st"><use href="#bone"/></svg><i class="badge">47</i><span class="sp"></span><span class="cols"><i class="cl"></i><svg class="cl"><use href="#sel"/></svg><svg class="cl"><use href="#eye"/></svg><svg class="cl"><use href="#mon"/></svg><svg class="cl"><use href="#cam"/></svg></span></div>
          <div class="row ind1 s"><svg class="ar"><use href="#arr"/></svg><svg class="ob"><use href="#tri"/></svg><span class="nm">eye_inner</span><svg class="st ml44"><use href="#wr"/></svg><svg class="st"><use href="#blk"/></svg><svg class="st"><use href="#md"/></svg><span class="sp"></span><span class="cols"><i class="cl"></i><svg class="cl"><use href="#sel"/></svg><svg class="cl"><use href="#eye"/></svg><svg class="cl"><use href="#mon"/></svg><svg class="cl"><use href="#cam"/></svg></span></div>
          <div class="row ind1 s"><svg class="ar"><use href="#arr"/></svg><svg class="ob"><use href="#tri"/></svg><span class="nm">eye_iris</span><svg class="st ml44"><use href="#wr"/></svg><svg class="st"><use href="#blk"/></svg><svg class="st"><use href="#md"/></svg><span class="sp"></span><span class="cols"><i class="cl"></i><svg class="cl"><use href="#sel"/></svg><svg class="cl"><use href="#eye"/></svg><svg class="cl"><use href="#mon"/></svg><svg class="cl"><use href="#cam"/></svg></span></div>
          <div class="row ind1 s"><svg class="ar"><use href="#arr"/></svg><svg class="ob"><use href="#tri"/></svg><span class="nm">eye_lens</span><svg class="st ml44"><use href="#wr"/></svg><svg class="st"><use href="#blk"/></svg><svg class="st"><use href="#md"/></svg><span class="sp"></span><span class="cols"><i class="cl"></i><svg class="cl"><use href="#sel"/></svg><svg class="cl"><use href="#eye"/></svg><svg class="cl"><use href="#mon"/></svg><svg class="cl"><use href="#cam"/></svg></span></div>
          <div class="row ind1 s"><svg class="ar"><use href="#arr"/></svg><svg class="ob"><use href="#tri"/></svg><span class="nm">eyebrow.l</span><svg class="st ml44"><use href="#wr"/></svg><svg class="st"><use href="#blk"/></svg><svg class="st"><use href="#md"/></svg><span class="sp"></span><span class="cols"><i class="cl"></i><svg class="cl"><use href="#sel"/></svg><svg class="cl"><use href="#eye"/></svg><svg class="cl"><use href="#mon"/></svg><svg class="cl"><use href="#cam"/></svg></span></div>
          <div class="row ind1 s"><svg class="ar"><use href="#arr"/></svg><svg class="ob"><use href="#tri"/></svg><span class="nm">eyebrow.r</span><svg class="st ml44"><use href="#wr"/></svg><svg class="st"><use href="#blk"/></svg><svg class="st"><use href="#md"/></svg><span class="sp"></span><span class="cols"><i class="cl"></i><svg class="cl"><use href="#sel"/></svg><svg class="cl"><use href="#eye"/></svg><svg class="cl"><use href="#mon"/></svg><svg class="cl"><use href="#cam"/></svg></span></div>
          <div class="row ind1 r-un"><svg class="ar"><use href="#arr"/></svg><svg class="ob"><use href="#tri"/></svg><span class="nm">mouth</span><svg class="st ml44"><use href="#wr"/></svg><svg class="st"><use href="#blk"/></svg><svg class="st"><use href="#mdo"/></svg><span class="sp"></span><span class="cols"><i class="cl"></i><svg class="cl"><use href="#sel"/></svg><svg class="cl"><use href="#eye"/></svg><svg class="cl"><use href="#mond"/></svg><svg class="cl"><use href="#camd"/></svg></span></div>
          <div class="row ind1 s"><svg class="ar"><use href="#arrd"/></svg><svg class="ob"><use href="#emp"/></svg><span class="nm">mouth_control</span><span class="sp"></span><span class="cols"><i class="cl"></i><svg class="cl"><use href="#sel"/></svg><svg class="cl"><use href="#eye"/></svg><svg class="cl"><use href="#mon"/></svg><svg class="cl"><use href="#cam"/></svg></span></div>
          <div class="row ind2 s"><svg class="ar"><use href="#arr"/></svg><svg class="ob"><use href="#imgf"/></svg><span class="nm">chart</span><svg class="st ml44"><use href="#img"/></svg><span class="sp"></span><span class="cols"><i class="cl"></i><svg class="cl"><use href="#sel"/></svg><svg class="cl"><use href="#eye"/></svg><svg class="cl"><use href="#mon"/></svg><svg class="cl"><use href="#cam"/></svg></span></div>
          <div class="row ind2 s"><svg class="ar"><use href="#arr"/></svg><svg class="ob"><use href="#arm"/></svg><span class="nm">mouth_control_armature</span><svg class="st ml44"><use href="#act"/></svg><svg class="st"><use href="#run"/></svg><svg class="st"><use href="#run"/></svg><span class="sp"></span><span class="cols"><i class="cl"></i><svg class="cl"><use href="#sel"/></svg><svg class="cl"><use href="#eye"/></svg><svg class="cl"><use href="#mon"/></svg><svg class="cl"><use href="#cam"/></svg></span></div>
          <div class="row ind2 s"><svg class="ar"><use href="#arr"/></svg><svg class="ob"><use href="#tri"/></svg><span class="nm">snap_mesh</span><svg class="st ml44"><use href="#md"/></svg><span class="sp"></span><span class="cols"><i class="cl"></i><svg class="cl"><use href="#sel"/></svg><svg class="cl"><use href="#eye"/></svg><svg class="cl"><use href="#mon"/></svg><svg class="cl"><use href="#camd"/></svg></span></div>
          <div class="row ind1 s"><svg class="ar"><use href="#arr"/></svg><svg class="ob"><use href="#tri"/></svg><span class="nm">pencil_left</span><svg class="st ml44"><use href="#wr"/></svg><svg class="st"><use href="#blk"/></svg><svg class="st"><use href="#md"/></svg><span class="sp"></span><span class="cols"><i class="cl"></i><svg class="cl"><use href="#sel"/></svg><svg class="cl"><use href="#eye"/></svg><svg class="cl"><use href="#mon"/></svg><svg class="cl"><use href="#cam"/></svg></span></div>
          <div class="row ind1 r-un"><svg class="ar"><use href="#arr"/></svg><svg class="ob"><use href="#tri"/></svg><span class="nm">pencil_right</span><svg class="st ml44"><use href="#wr"/></svg><svg class="st"><use href="#blk"/></svg><svg class="st"><use href="#mdo"/></svg><span class="sp"></span><span class="cols"><i class="cl"></i><svg class="cl"><use href="#act"/></svg><svg class="cl"><use href="#eye"/></svg><svg class="cl"><use href="#mond"/></svg><svg class="cl"><use href="#camd"/></svg></span></div>
          <div class="row ind1 s"><svg class="ar"><use href="#arr"/></svg><svg class="ob"><use href="#tri"/></svg><span class="nm">sc</span><svg class="st ml44"><use href="#wr"/></svg><svg class="st"><use href="#blk"/></svg><svg class="st"><use href="#md"/></svg><span class="sp"></span><span class="cols"><i class="cl"></i><svg class="cl"><use href="#sel"/></svg><svg class="cl"><use href="#eye"/></svg><svg class="cl"><use href="#mon"/></svg><svg class="cl"><use href="#cam"/></svg></span></div>
          <div class="row ind1 s"><svg class="ar"><use href="#arr"/></svg><svg class="ob"><use href="#tri"/></svg><span class="nm">sc.001</span><svg class="st ml44"><use href="#wr"/></svg><svg class="st"><use href="#blk"/></svg><svg class="st"><use href="#md"/></svg><span class="sp"></span><span class="cols"><i class="cl"></i><svg class="cl"><use href="#sel"/></svg><svg class="cl"><use href="#eye"/></svg><svg class="cl"><use href="#mon"/></svg><svg class="cl"><use href="#cam"/></svg></span></div>
          <div class="row ind1 s"><svg class="ar"><use href="#arr"/></svg><svg class="ob"><use href="#tri"/></svg><span class="nm">sc.002</span><svg class="st ml44"><use href="#wr"/></svg><svg class="st"><use href="#blk"/></svg><svg class="st"><use href="#md"/></svg><span class="sp"></span><span class="cols"><i class="cl"></i><svg class="cl"><use href="#sel"/></svg><svg class="cl"><use href="#eye"/></svg><svg class="cl"><use href="#mon"/></svg><svg class="cl"><use href="#cam"/></svg></span></div>
          <div class="row ind1 s"><svg class="ar"><use href="#arr"/></svg><svg class="ob"><use href="#tri"/></svg><span class="nm">sc.003</span><svg class="st ml44"><use href="#wr"/></svg><svg class="st"><use href="#blk"/></svg><svg class="st"><use href="#md"/></svg><span class="sp"></span><span class="cols"><i class="cl"></i><svg class="cl"><use href="#sel"/></svg><svg class="cl"><use href="#eye"/></svg><svg class="cl"><use href="#mon"/></svg><svg class="cl"><use href="#cam"/></svg></span></div>
          <div class="row ind1 r-act"><svg class="ar"><use href="#arr"/></svg><span class="sp"></span><span class="cols"><i class="cl"></i><svg class="cl"><use href="#sel"/></svg><svg class="cl"><use href="#eye"/></svg><svg class="cl"><use href="#mon"/></svg><svg class="cl"><use href="#cam"/></svg></span></div>
          <div class="row ind0 r-dk"><svg class="ar"><use href="#arrd"/></svg><svg class="ob"><use href="#coll"/></svg><span class="nm">scene_assets</span><span class="sp"></span><span class="cols"><svg class="cl i24"><use href="#chk"/></svg><svg class="cl"><use href="#sel"/></svg><svg class="cl"><use href="#eye"/></svg><svg class="cl"><use href="#mon"/></svg><svg class="cl"><use href="#cam"/></svg></span></div>
        </div>
      </section>

      <section class="props">
        <div class="pr-hdr">
          <span class="btn w62"><svg class="i32"><use href="#oltree"/></svg><svg class="i12"><use href="#v"/></svg></span>
          <span class="searchbox sb-pr"><svg class="i28"><use href="#srch"/></svg></span>
          <span class="btn w38 ml-auto"><svg class="i16"><use href="#chev"/></svg></span>
        </div>
        <div class="pr-body">
          <aside class="pr-tabs">
            <svg class="pt pt-first"><use href="#p-tool"/></svg>
            <svg class="pt"><use href="#p-rnd"/></svg><svg class="pt"><use href="#p-out"/></svg><svg class="pt"><use href="#p-lay"/></svg><svg class="pt"><use href="#p-scn"/></svg><svg class="pt pt-gap"><use href="#p-wld"/></svg>
            <svg class="pt pt-gap"><use href="#p-col"/></svg>
            <svg class="pt"><use href="#p-obj"/></svg><svg class="pt"><use href="#wr"/></svg><svg class="pt"><use href="#p-part"/></svg><svg class="pt"><use href="#p-phys"/></svg><svg class="pt"><use href="#p-cons"/></svg><svg class="pt pt-last"><use href="#md"/></svg>
            <span class="pt-act"><svg class="pt"><use href="#p-mat"/></svg></span>
            <svg class="pt"><use href="#p-tex"/></svg>
          </aside>
          <div class="pr-main">
            <div class="pr-crumb"><svg class="i32"><use href="#objm"/></svg><span>Torus.002</span><svg class="i18 ml-c"><use href="#chevr"/></svg><svg class="i32 ml-c2"><use href="#sphere"/></svg><span>sc_cap_patch</span><svg class="i32 pr-pin"><use href="#pin"/></svg></div>
            <div class="mat-list">
              <div class="ml-box"><div class="ml-item"><svg class="i24"><use href="#sphere"/></svg>sc_cap_patch</div><svg class="ml-arr"><use href="#arr"/></svg><svg class="grip ml-grip"><use href="#grip"/></svg></div>
              <div class="ml-side"><span class="pm">+<br>&#8722;</span><span class="btn w38 ml-d"><svg class="i16"><use href="#chev"/></svg></span></div>
            </div>
            <div class="mat-sel">
              <span class="matblock mb-pr"><span class="mb-ic"><svg class="i28"><use href="#sphere"/></svg><svg class="i12"><use href="#v"/></svg></span><span class="mb-name">sc_cap_patch</span><span class="mb-g">7</span><span class="mb-s"><svg class="i24"><use href="#doc"/></svg></span><span class="mb-s"><svg class="i12"><use href="#xw"/></svg></span></span>
              <span class="btn w62"><svg class="i32"><use href="#md"/></svg><svg class="i12"><use href="#v"/></svg></span>
            </div>
            <section class="panel p-prev"><h3 class="ph"><svg class="i18"><use href="#chevr"/></svg><span>Preview</span><svg class="grip"><use href="#grip"/></svg></h3></section>
            <section class="panel p-surf">
              <h3 class="ph"><svg class="i18"><use href="#chev"/></svg><span>Surface</span><svg class="grip"><use href="#grip"/></svg></h3>
              <div class="usen"><svg class="i32"><use href="#nodeic"/></svg><span>Use Nodes</span></div>
              <div class="prow pg1"><span class="tdark">Surface</span><span class="dd w-f"><i class="dot"></i>Principled BSDF</span></div>
              <div class="prow pg2"><span></span><span class="dd w-f">GGX<svg class="i12 push"><use href="#v"/></svg></span><i class="sd"></i></div>
              <div class="prow pg3"><span></span><span class="dd w-f">Christensen-Burley<svg class="i12 push"><use href="#v"/></svg></span><i class="sd"></i></div>
              <div class="prow pg3"><svg class="i16 base-ar"><use href="#arr"/></svg><span class="tdark">Base Color</span><span class="gf">logo_patch_embroid.png.001</span></div>
              <div class="prow pg3"><span class="tdark">Subsurface</span><span class="comb"><span class="dotb"><i class="dot"></i></span><span class="numf">0.000</span></span><i class="sd"></i></div>
              <div class="prow pg3 top-al"><span class="tdark">Subsurface Radius</span><span class="comb"><span class="dotb"><i class="dot"></i></span><span class="vec"><span>1.000</span><span>0.200</span><span>0.100</span></span></span><span class="sds"><i class="sd"></i><i class="sd"></i><i class="sd"></i></span></div>
              <div class="prow pg4"><span></span><span class="comb"><span class="dotb2"></span><span class="whitebar"></span></span></div>
            </section>
          </div>
        </div>
      </section>
    </div>
  </div>

  <footer class="status">
    <svg class="ms"><use href="#mouse"/></svg><span class="st1">Select</span>
    <svg class="ms"><use href="#mouse"/></svg><span class="st2">Center View to Mouse</span>
    <svg class="ms"><use href="#mouse"/></svg>
    <span class="ver">3.0.1</span>
  </footer>
</div>
</body>
</html>
```

FILE: styles.css
```css
* { box-sizing: border-box; }
html, body { margin: 0; padding: 0; background: #000; }
body { width: 4096px; height: 2048px; overflow: hidden; font: 20.5px "DejaVu Sans", sans-serif; color: #a6a6a6; }
.defs { position: absolute; }
svg { display: block; flex: none; overflow: visible; }
p, h3, h4, dl, dd { margin: 0; font-weight: 400; font-size: inherit; }
i { font-style: normal; display: block; }
.i12 { width: 12px; height: 12px; }
.i14 { width: 14px; height: 14px; }
.i16 { width: 16px; height: 16px; }
.i18 { width: 18px; height: 18px; }
.i20 { width: 20px; height: 20px; }
.i24 { width: 24px; height: 24px; }
.i28 { width: 28px; height: 28px; }
.i32 { width: 32px; height: 32px; }
.i44 { width: 44px; height: 44px; }
.ml11 { margin-left: 11px; }
.ml12 { margin-left: 12px; }
.ml14 { margin-left: 14px; }
.ml-auto { margin-left: auto; }
.push { margin-left: auto; }
.app { margin: 47px 0 0 152px; width: 3774px; height: 1994px; display: flex; flex-direction: column; }

/* top bar */
.topbar { height: 50px; background: #111; display: flex; align-items: flex-start; }
.logo { width: 32px; height: 30px; margin: 8px 0 0 19px; }
.topmenu { display: flex; gap: 29px; margin: 11px 0 0 18px; line-height: 24px; color: #b0b0b0; text-shadow: 1px 1px 0 #000; }
.tabs { display: flex; margin: 9px 0 0 47px; height: 37px; }
.tab { padding: 8px 16.5px 0; line-height: 24px; white-space: nowrap; color: #999; text-shadow: 1px 1px 0 #000; }
.tab.on { background: #a65a00; border-radius: 5px 5px 0 0; padding: 8px 15px 0; margin-right: 4px; color: #bbb; }
.tab.plus { font-size: 28px; padding: 2px 10px 0; }
.scenes { margin-left: auto; padding: 3px 18px 0 0; display: flex; gap: 12px; }
.idblock { width: 376px; height: 38px; display: flex; border: 2px solid #ff9500; border-radius: 8px; overflow: hidden; background: #2f2f2f; }
.id-ic { width: 60px; display: flex; align-items: center; justify-content: center; gap: 3px; }
.id-name { width: 235px; background: #111; border-left: 2px solid #ff9500; display: flex; align-items: center; padding-left: 12px; font-size: 20px; color: #8f8f8f; }
.id-new { width: 40px; background: #808080; display: flex; align-items: center; justify-content: center; }
.id-x { flex: 1; background: #ff9500; display: flex; align-items: center; justify-content: center; }

/* common controls */
.hdr { height: 49px; display: flex; align-items: center; padding-left: 18px; position: relative; z-index: 1; }
.hdr-l { display: flex; align-items: center; flex: none; }
.hdr-r { margin-left: auto; display: flex; align-items: center; gap: 12px; padding-right: 11px; }
.hl-vp { width: 1208px; }
.hl-nd { width: 1096px; }
.hl-tl { width: 1272px; }
.btn { height: 39px; flex: none; border: 2px solid #ff9500; border-radius: 8px; background: #333; display: flex; align-items: center; justify-content: center; gap: 2px; overflow: hidden; box-shadow: 0 2px 0 rgba(70,40,0,.6); }
.btn:not(.split) { padding: 0 5px; }
.btxt { margin-left: 4px; white-space: nowrap; color: #b5b5b5; text-shadow: 1px 1px 0 #000; }
.btxt.ctr { margin-left: 14px; }
.w38 { width: 38px; } .w59 { width: 59px; } .w60 { width: 60px; } .w62 { width: 62px; } .w63 { width: 63px; } .w76 { width: 76px; } .w78 { width: 78px; }
.w100 { width: 100px; } .w102 { width: 102px; } .w121 { width: 121px; } .w154 { width: 154px; } .w172 { width: 172px; } .w188 { width: 188px; } .w215 { width: 215px; } .w220 { width: 220px; }
.btn.split { justify-content: flex-start; }
.g38 { width: 38px; height: 100%; background: #808080; display: flex; align-items: center; justify-content: center; flex: none; margin-right: 6px; }
.g150 { width: 150px; height: 100%; background: #808080; display: flex; align-items: center; justify-content: space-around; flex: none; margin-right: 12px; }
.rust { background: #a65a00; }
.mid { margin-left: 6px; }
.disc { width: 27px; height: 27px; border-radius: 50%; background: #fff; }
.disc.half { background: linear-gradient(90deg, #fff 45%, #999 45%); }
.disc.dim { opacity: .45; }
.btn-row { height: 38px; display: flex; align-items: center; justify-content: space-around; background: #808080; border-radius: 8px; box-shadow: 0 2px 0 #ff9500; flex: none; }
.w186 { width: 186px; }
.w118 { width: 118px; border: 2px solid #ff9500; }
.menu { display: flex; gap: 31px; margin-left: 24px; text-shadow: 1px 1px 0 #555, -1px 0 0 #ddd; color: #888; }
.m-nla { gap: 30px; }
.menu.bright { color: #b5b5b5; text-shadow: 1px 1px 0 #000; gap: 30px; margin-left: 21px; }
.m-tl { margin-left: 18px; }
.searchbox { height: 38px; background: #111; border: 2px solid #ff9500; border-radius: 8px; display: flex; align-items: center; padding-left: 8px; flex: none; overflow: hidden; position: relative; }
.sb-t { position: absolute; right: 0; top: 0; bottom: 0; width: 43px; background: #808080; color: #fff; display: flex; align-items: center; justify-content: center; }

/* viewport */
.main { flex: 1; display: flex; height: 1907px; }
.leftcol { width: 2943px; flex: none; display: flex; flex-direction: column; margin-left: 1px; }
.viewport { height: 793px; position: relative; overflow: hidden; border-radius: 10px 10px 0 0; flex: none;
  background-color: #ffa000;
  background-image:
    linear-gradient(90deg, #808080 3px, transparent 3px),
    linear-gradient(#808080 3px, transparent 3px),
    radial-gradient(ellipse 900px 300px at 1332px 432px, #ff8e00 0, rgba(255,146,0,.5) 60%, rgba(255,160,0,0) 100%),
    linear-gradient(#ffa600, #ffa400 300px, #ff9f00);
  background-size: 228.6px 100%, 100% 228.6px, 100% 100%, 100% 100%;
  background-position: 187px 0, 0 201.5px, 0 0, 0 0;
}
.torus { position: absolute; left: 0; top: 0; width: 2942px; height: 793px; }
.vp-hdr { background: #d98000; }
.vp-tool { height: 51px; padding: 9px 11px 0 87px; display: flex; justify-content: space-between; align-items: flex-start; background: rgba(217,128,0,.93); position: relative; z-index: 1; }
.opt { justify-content: space-between; }
.vp-body { height: 693px; display: flex; position: relative; z-index: 1; }
.toolbar { width: 82px; margin: 16px 0 0 15px; flex: none; display: flex; flex-direction: column; gap: 12px; }
.tgroup { border: 1px solid #ff9500; border-radius: 8px; overflow: hidden; background: #333; display: flex; flex-direction: column; gap: 2px; }
.g2 { margin-top: 4px; }
.g3 { margin-top: -3px; }
.tool { height: 66px; display: flex; align-items: center; justify-content: center; background: #333; }
.g1 .tool { height: 67.5px; }
.tool.on { background: #808080; }
.info { width: 320px; margin: 16px 0 0 34px; line-height: 35px; color: #7a7a7a; text-shadow: 1px 1px 0 #5a3500, -1px 0 0 #f2f2f2; flex: none; }
.stats { margin-top: 19px; display: grid; grid-template-columns: 106px auto; }
.npanels { margin: 3px 0 0 2078px; width: 363px; flex: none; display: flex; flex-direction: column; gap: 5px; }
.panel { background: #ff9500; border-radius: 10px; color: #7a7a7a; text-shadow: -1px 0 0 #fff, 1px 1px 0 #777; overflow: hidden; }
.ph { display: flex; align-items: center; height: 50px; padding-left: 15px; gap: 8px; font-size: 20.5px; }
.grip { width: 22px; height: 11px; margin-left: auto; margin-right: 12px; }
.tdark { color: #7d7d7d; text-shadow: 1px 1px 0 #a05a00, -1px 0 0 #ffd27a; }
.at { height: 179px; }
.tool-name { display: flex; align-items: center; gap: 14px; margin: 14px 0 0 28px; }
.ar-row { margin: 18px 0 0 18px; }
.op { height: 246px; }
.sub { padding-left: 43px; height: 49px; margin-top: -1px; }
.subbody { height: 147px; background: #dd8000; display: flex; padding: 20px 0 0 28px; gap: 18px; }
.lab-aff { width: 110px; white-space: nowrap; line-height: 26px; }
.checks { display: flex; flex-direction: column; gap: 13px; }
.ck { display: flex; align-items: center; gap: 7px; line-height: 27px; white-space: nowrap; }
.ck i { width: 26px; height: 27px; background: #808080; border: 1px solid #ff9f1a; border-radius: 5px; }
.ws { height: 48px; }
.vtabs { width: 37px; flex: none; background: #111; display: flex; flex-direction: column; gap: 10px; color: #8f8f8f; text-shadow: 1px 1px 0 #000; }
.vt { width: 32px; background: #111; border: 2px solid #c87400; border-width: 2px 0 2px 2px; border-radius: 8px 0 0 8px; writing-mode: vertical-rl; transform: rotate(180deg); display: flex; align-items: center; justify-content: center; font-size: 20px; flex: none; }
.vt.on { background: #a65a00; color: #aaa; }
.vt-vp { margin: 3px 0 0 13px; padding-top: 8px; height: 690px; }
.t40 { height: 40px; } .t45 { height: 45px; } .t48 { height: 48px; } .t52 { height: 52px; } .t60 { height: 60px; } .t67 { height: 67px; } .t68 { height: 68px; } .t75 { height: 75px; } .t79 { height: 79px; } .t117 { height: 117px; } .t130 { height: 130px; } .t159 { height: 159px; }

/* NLA */
.nla { height: 497px; margin-top: 6px; background: #1c1c1c; border-radius: 10px 10px 0 0; overflow: hidden; flex: none; }
.rust-h { background: #a65a00; }
.tall { height: 38px; }
.nla-body { height: 448px; display: flex; }
.nla-main { width: 2515px; flex: none; position: relative; }
.ruler-row { height: 45px; display: flex; background: #000; position: relative; }
.sb-nla { width: 383px; margin: 5px 0 0 4px; height: 37px; }
.ruler { display: flex; font-size: 20px; color: #8c8c8c; text-shadow: 1px 1px 0 #333; }
.ruler span { flex: none; text-align: center; }
.rl-nla { margin-left: 194px; padding-top: 11px; }
.rl-nla span { width: 203.5px; }
.frame { position: absolute; background: #808080; color: #fff; border-radius: 8px; text-align: center; z-index: 3; }
.fr-nla { left: 460px; top: 6px; width: 48px; height: 34px; line-height: 34px; }
.tracks { position: relative; height: 403px; overflow: hidden; background: linear-gradient(90deg, #1c1c1c 489px, #a65a00 489px, #a65a00 1490px, #1c1c1c 1490px); }
.nrow { height: 47px; margin-bottom: 4px; display: flex; background: transparent; }
.nrow.n1 { height: 34px; margin-bottom: 8px; }
.chan { width: 365px; margin-left: 28px; background: #808080; border: 1px solid #ff9500; border-width: 1px 0; display: flex; align-items: center; padding-left: 4px; flex: none; position: relative; }
.ch-top { width: 30px; height: 4px; margin-left: 330px; background: #ff9500; align-self: flex-end; }
.ch-ck { position: absolute; left: 305px; top: 10px; width: 18px; height: 24px; }
.lck { position: absolute; left: 339px; top: 10px; width: 20px; height: 30px; }
.pre { width: 96px; flex: none; background: #1c1c1c; }
.pre.amb { width: 87px; background: #d98000; margin-right: 9px; }
.pre.brn { width: 87px; background: #9d5600; margin-right: 9px; }
.strip { width: 1001px; flex: none; position: relative; }
.rest { flex: 1; background-image: linear-gradient(90deg, rgba(255,255,255,.03) 2px, transparent 2px); background-size: 101.75px 100%; }
.amb { background-color: #d98000; }
.orng { background-color: #ff9500; }
.nblk { background-color: #0c0c0c; }
.s-key { background: linear-gradient(90deg, #808080 933px, #ff9500 933px); }
.kfs { width: 1001px; height: 34px; }
.gray { background: #808080; }
.blk { background: #000; }
.dk { background: #2e2e2e; }
.sbox { display: flex; align-items: center; height: 100%; padding-left: 10px; color: #fff; border: 2px solid #fff; }
.sb-short { width: 969px; }
.snm { display: flex; align-items: center; height: 100%; padding-left: 11px; color: #c4c4c4; text-shadow: 1px 1px 0 #666; }
.snm-o { color: #ff9500; text-shadow: -1px 0 0 #555; background-image: linear-gradient(90deg, #fff 2px, transparent 2px); background-size: 76.5px 64%; background-repeat: repeat-x; background-position: 70px 50%; }
.dashed { display: flex; align-items: center; width: 94px; height: 100%; background: #000; padding-left: 11px; color: #b5b5b5; border: 2px dashed #444; text-shadow: 1px 1px 0 #666; }
.op2 { background: #2e2e2e; border-width: 0 0 0 2px; }
.hscroll { position: absolute; background: #808080; border: 2px solid #ff9500; border-radius: 10px; height: 19px; display: flex; justify-content: space-between; align-items: center; padding: 0 3px; z-index: 2; }
.hscroll i { width: 8px; height: 13px; border-radius: 50%; background: #444; border: 1px solid #ddd; }
.hs-nla { left: 409px; top: 382px; width: 2088px; }
.playline { position: absolute; width: 5px; background: #808080; top: 0; bottom: 0; z-index: 3; }
.pl-nla { left: 482px; }
.side { background: #a65a00; flex: none; width: 390px; }
.s-nla { padding-top: 18px; }
.nla-side-top { display: flex; align-items: center; padding-left: 16px; height: 37px; }
.namefield { width: 250px; height: 37px; margin-left: 22px; background: #111; border: 2px solid #ff9500; border-radius: 8px; display: flex; align-items: center; gap: 14px; padding-left: 10px; color: #b5b5b5; text-shadow: 1px 1px 0 #000; }
.ckb { margin-left: 25px; }
.strip-p { margin: 21px 0 0 15px; width: 361px; height: 372px; border-radius: 10px 10px 0 0; }
.frow { display: grid; grid-template-columns: 139px 186px; column-gap: 19px; align-items: center; }
.frow > .tdark { text-align: right; white-space: nowrap; }
.num { height: 38px; background: #808080; color: #ddd; text-shadow: none; display: flex; align-items: center; justify-content: center; letter-spacing: 1px; }
.num.top { border-radius: 8px 8px 0 0; border-bottom: 1px solid #ff9f1a; }
.num.bot { border-radius: 0 0 8px 8px; }
.fr-first { margin-top: 15px; }
.fr-gap { margin-top: 14px; }
.fr-gap2 { margin-top: 7px; }
.fr-gap3 { margin-top: 35px; }
.fr-last { margin-top: 7px; }
.dd { height: 36px; background: #333; border-radius: 8px; display: flex; align-items: center; padding: 0 10px 0 15px; color: #bbb; text-shadow: 1px 1px 0 #000; white-space: nowrap; }
.ck2 { color: #7a7a7a; }
.vt-nla { padding-top: 11px; height: 448px; }

/* node editor */
.nodeed { height: 332px; margin-top: 7px; background: #111; flex: none; overflow: hidden; }
.nd-hdr { height: 48px; background: #111; }
.btn.w172 { justify-content: flex-start; }
.usenodes { display: flex; align-items: center; gap: 6px; margin-left: 20px; color: #b5b5b5; text-shadow: 1px 1px 0 #000; }
.matblock { width: 460px; height: 38px; margin-left: 12px; display: flex; border: 2px solid #ff9500; border-radius: 8px; overflow: hidden; background: #333; flex: none; }
.mb-ic { width: 58px; display: flex; align-items: center; justify-content: center; gap: 3px; }
.mb-name { width: 236px; background: #111; border-left: 2px solid #ff9500; display: flex; align-items: center; padding-left: 12px; color: #b0b0b0; }
.mb-g { flex: 1; background: #808080; color: #ccc; display: flex; align-items: center; padding-left: 24px; }
.mb-s { width: 39px; background: #808080; border-left: 1px solid #ff9f1a; display: flex; align-items: center; justify-content: center; }
.pin { margin-left: 14px; }
.snapbtn { width: 38px; height: 37px; background: #ff9500; border-radius: 8px; display: flex; align-items: center; justify-content: center; }
.nd-hdr .hdr-r { gap: 11px; }
.nd-body { height: 284px; display: flex; }
.nd-canvas { width: 2515px; flex: none; position: relative; overflow: hidden; background-image: radial-gradient(circle, #2b2b2b 1.5px, transparent 2px); background-size: 268px 268px; background-position: 30px -40px; }
.nodes { position: absolute; left: 0; top: 0; width: 2515px; height: 284px; }
.crumbs { position: relative; display: flex; align-items: center; gap: 15px; margin: 30px 0 0 2px; color: #b5b5b5; text-shadow: 1px 1px 0 #000; }
.cr-c0 { margin-right: 6px; }
.cr-c { margin: 0 6px 0 9px; }
.s-nd { padding-top: 5px; }
.nd-p { margin-left: 14px; width: 360px; height: 217px; }
.nd-p2 { margin: 5px 0 0 14px; width: 360px; height: 48px; }
.nfield { display: flex; align-items: center; padding-left: 18px; }
.nfield .tdark { width: 80px; }
.nf-in { width: 245px; height: 36px; background: #111; border-radius: 8px; display: flex; align-items: center; gap: 12px; padding-left: 6px; color: #bbb; text-shadow: 1px 1px 0 #000; }
.nf1 { margin-top: 16px; }
.nf2 { margin-top: 14px; }
.nd-color { display: flex; align-items: center; margin: 29px 0 0 51px; gap: 5px; }
.swatch { width: 25px; height: 25px; background: #808080; border-radius: 3px; }
.lines { width: 30px; height: 24px; margin-left: 170px; background: repeating-linear-gradient(#808080 0 3px, transparent 3px 9px); }
.vt-nd { padding-top: 9px; height: 284px; gap: 5px; }

/* timeline */
.timeline { height: 264px; margin-top: 6px; background: #111; flex: none; border-radius: 10px 10px 0 0; overflow: hidden; }
.btn-pair { width: 251px; height: 39px; flex: none; display: flex; background: #333; border: 2px solid #ff9500; border-radius: 8px; }
.btn-pair span { display: flex; align-items: center; gap: 5px; padding: 0 5px 0 10px; white-space: nowrap; color: #aaa; text-shadow: 1px 1px 0 #000; font-size: 19px; }
.btn-pair span + span { border-left: 1px solid #ff9500; }
.tl-center { display: flex; gap: 11px; }
.transport { width: 234px; height: 39px; background: #808080; border: 2px solid #ff9500; border-radius: 8px; display: flex; justify-content: space-around; align-items: center; }
.rec { width: 14px; height: 20px; background: #fff; border-radius: 50%; margin-left: 12px; }
.g38 .rec { margin: 0; }
.tp { width: 24px; height: 26px; }
.curframe { width: 147px; height: 38px; background: #808080; border: 2px solid #ff9500; border-radius: 8px; color: #ddd; display: flex; align-items: center; justify-content: center; }
.range { width: 376px; height: 38px; display: flex; background: #808080; border: 2px solid #ff9500; border-radius: 8px; color: #ddd; }
.r-ic { width: 38px; display: flex; align-items: center; justify-content: center; flex: none; }
.r-f { display: flex; align-items: center; justify-content: space-between; border-left: 1px solid #ff9f1a; padding: 0 30px; flex: none; }
.rf1 { width: 172px; }
.rf2 { width: 162px; }
.r-f b { font-weight: 400; }
.tl-body { height: 215px; display: flex; position: relative; }
.tl-left { width: 399px; flex: none; background: #111; }
.sb-tl { width: 383px; margin: 5px 0 0 4px; height: 37px; }
.tch { display: flex; align-items: center; gap: 6px; }
.summ { height: 35px; margin-top: 8px; background: #ffa500; border-radius: 14px 0 0 14px; width: 393px; padding-left: 4px; color: #6e6e6e; text-shadow: 1px 0 0 #6e6e6e, 0 1px 0 #8a5a10; }
.grp { height: 33px; width: 393px; background: #808080; border: 1px solid #ff9500; border-radius: 12px 0 0 0; padding-left: 4px; }
.sub1 { height: 33px; width: 379px; margin: 2px 0 2px 14px; background: #4c4c4c; padding-left: 5px; color: #999; }
.q { color: #aaa; font-size: 28px; }
.lastc { height: 40px; margin-bottom: 0; }
.tl-right { flex: 1; position: relative; }
.rl-tl { height: 45px; padding: 11px 0 0 60.6px; }
.rl-tl span { width: 102.4px; }
.fr-tl { left: 712px; top: 5px; width: 48px; height: 35px; line-height: 35px; }
.keys { height: 171px; position: relative; overflow: hidden; border-radius: 0 0 10px 0;
  background-color: #1c1c1c;
  background-image:
    linear-gradient(90deg, #111 3px, transparent 3px),
    linear-gradient(90deg, #111 2px, transparent 2px),
    linear-gradient(90deg, transparent 736px, #a65a00 736px);
  background-size: 102.4px 100%, 51.2px 100%, 100% 100%;
  background-position: 8px 0, 34px 0, 0 0;
}
.keysvg { position: absolute; left: 0; top: 0; width: 2544px; height: 171px; }
.hs-tl { left: 10px; top: 147px; width: 1779px; height: 20px; }
.pl-tl { left: 735px; width: 4px; }

/* outliner */
.rightcol { width: 820px; margin-left: 7px; flex: none; display: flex; flex-direction: column; }
.outliner { height: 943px; background: #333; border-radius: 10px 10px 0 0; overflow: hidden; flex: none; }
.ol-hdr { height: 51px; display: flex; align-items: flex-start; padding: 4px 15px 0 16px; }
.sb-ol { width: 218px; margin-left: 128px; }
.newcol { width: 38px; height: 38px; margin-left: 11px; background: #808080; border: 1px solid #ff9500; border-radius: 6px; display: block; }
.newcol b { display: block; width: 12px; height: 12px; margin: 6px 0 0 18px; background: #fff; border-radius: 50%; }
.oltree { position: relative; }
.treeline { position: absolute; left: 57px; top: 90px; width: 3px; height: 736px; background: #808080; z-index: 2; }
.treeline2 { position: absolute; left: 97px; top: 482px; height: 100px; border-left: 3px dashed #808080; z-index: 2; }
.row { height: 39.3px; display: flex; align-items: center; color: #8a8a8a; text-shadow: -1px 0 0 #bbb, 1px 1px 0 #555; font-size: 20px; white-space: nowrap; }
.ar { width: 16px; height: 16px; margin-right: 16px; }
.ob { width: 32px; height: 32px; margin-right: 12px; }
.ind0 { padding-left: 50px; }
.ind1 { padding-left: 89px; }
.ind2 { padding-left: 128px; }
.r-root { padding-left: 43px; height: 39.3px; }
.r-root .nm { color: #8f7a60; }
.r-fred { background: #404040; }
.actbox { width: 40px; height: 38px; margin: 0 8px 0 -11px; background: #808080; border: 1px solid #c87400; border-radius: 8px; display: flex; align-items: center; justify-content: center; }
.actbox .ob { margin: 0; }
.r-dk { background: #333; }
.r-wd { background: #3c3c3c; }
.s { background: #d98000; }
.s .nm { color: #7c7c7c; text-shadow: -1px 0 0 #b0690a, 1px 1px 0 #9a5a00; }
.r-un { background: #333; color: #8a8a8a; }
.r-act { background: #808080; border: 1px solid #ff9500; border-width: 1px 0; }
.sp { flex: 1; }
.st { width: 30px; height: 30px; margin-right: 9px; }
.ml44 { margin-left: 44px; }
.badge { width: 20px; height: 20px; border-radius: 50%; background: #000; color: #aaa; font-size: 12px; line-height: 20px; text-align: center; margin: 14px 0 0 -20px; text-shadow: none; }
.cols { display: flex; padding-right: 13px; flex: none; }
.cl { width: 28px; height: 28px; margin: 0 5.75px; }
svg.cl.i24 { width: 24px; height: 24px; margin: 2px 7.75px; }

/* properties */
.props { height: 955px; margin-top: 6px; overflow: hidden; border-radius: 10px 10px 0 0; background: #a65a00; flex: none; }
.pr-hdr { height: 49px; display: flex; align-items: center; padding: 0 15px 0 16px; }
.sb-pr { width: 217px; margin-left: 225px; }
.pr-body { display: flex; height: 906px; }
.pr-tabs { width: 56px; flex: none; background: #111; display: flex; flex-direction: column; align-items: center; padding-top: 26px; }
.pt { width: 30px; height: 30px; margin-bottom: 25px; }
.pt-first { margin-bottom: 42px; }
.pt-gap { margin-bottom: 41px; }
.pt-last { margin-bottom: 16px; }
.pt-act { width: 51px; height: 50px; margin-left: 5px; background: #a65a00; border-radius: 8px 0 0 8px; display: flex; align-items: center; justify-content: center; margin-bottom: 38px; }
.pt-act .pt { margin: 0; }
.pr-main { flex: 1; padding: 0 14px 0 14px; color: #ccc; }
.pr-crumb { display: flex; align-items: center; height: 52px; margin: 9px 0 0 4px; gap: 14px; color: #aaa; text-shadow: 1px 1px 0 #444, -1px 0 0 #fff; }
.ml-c { margin-left: 20px; }
.ml-c2 { margin-left: 4px; }
.pr-pin { margin-left: auto; margin-right: 4px; }
.mat-list { display: flex; margin-top: 25px; }
.ml-box { width: 678px; height: 157px; background: #2e2e2e; border: 2px solid #ff9500; border-radius: 8px; padding: 9px; position: relative; margin-left: 2px; }
.ml-item { height: 36px; background: #808080; border: 1px solid #ff9f1a; border-radius: 6px; display: flex; align-items: center; gap: 18px; padding-left: 5px; color: #ddd; letter-spacing: 1px; }
.ml-arr { position: absolute; left: 22px; bottom: 12px; width: 14px; height: 14px; }
.ml-grip { position: absolute; left: 326px; bottom: 12px; margin: 0; }
.ml-side { margin-left: 17px; width: 38px; }
.pm { display: block; height: 79px; background: #808080; border: 1px solid #ff9f1a; border-radius: 8px; color: #fff; text-align: center; font-size: 26px; line-height: 38px; }
.ml-d { margin-top: 12px; height: 40px; }
.mat-sel { display: flex; margin-top: 11px; gap: 17px; }
.mb-pr { width: 654px; margin-left: 2px; }
.mb-pr .mb-name { width: 394px; }
.p-prev { margin-top: 20px; height: 49px; width: 736px; }
.p-surf { margin-top: 5px; width: 736px; height: 560px; text-shadow: none; }
.p-prev .ph, .p-surf .ph { color: #808080; text-shadow: 1px 1px 0 #a05a00; padding-left: 12px; }
.p-prev .ph { height: 49px; }
.usen { margin: 15px 0 0 18px; width: 701px; height: 38px; background: #808080; border-radius: 6px; box-shadow: 0 2px 0 #dd8000; display: flex; align-items: center; color: #f0f0f0; position: relative; }
.usen span { position: absolute; left: 0; right: 0; text-align: center; }
.prow { display: flex; align-items: center; position: relative; }
.prow > .tdark, .prow > span:first-child { width: 274px; text-align: right; margin-right: 20px; white-space: nowrap; flex: none; }
.w-f { width: 384px; flex: none; }
.pg1 { margin-top: 34px; }
.pg2 { margin-top: 34px; }
.pg3 { margin-top: 14px; }
.pg4 { margin-top: 13px; }
.base-ar { position: absolute; left: 36px; top: 10px; }
.dot { width: 14px; height: 14px; border-radius: 50%; background: #808080; margin-right: 14px; flex: none; }
.gf { width: 384px; height: 35px; background: #808080; border-radius: 8px; display: flex; align-items: center; padding-left: 40px; color: #ddd; }
.comb { width: 385px; display: flex; flex: none; align-items: flex-start; }
.dotb { width: 36px; height: 36px; background: #333; border-radius: 8px 0 0 8px; display: flex; align-items: center; justify-content: center; flex: none; }
.dotb .dot { margin: 0; }
.dotb2 { width: 36px; height: 12px; background: #333; border-radius: 8px 0 0 0; flex: none; }
.numf { flex: 1; height: 36px; background: #808080; border-radius: 0 8px 8px 0; color: #ddd; display: flex; align-items: center; justify-content: center; letter-spacing: 1px; }
.sd { width: 12px; height: 12px; margin-left: 17px; border-radius: 50%; background: #fff; border: 2px solid #808080; flex: none; }
.sds { display: flex; flex-direction: column; gap: 26px; margin-top: 12px; }
.vec { margin-left: 14px; flex: 1; border-radius: 8px; overflow: hidden; display: flex; flex-direction: column; gap: 1px; background: #ff9f1a; }
.vec span { height: 37px; background: #808080; color: #ddd; display: flex; align-items: center; justify-content: center; letter-spacing: 1px; }
.top-al { align-items: flex-start; }
.whitebar { flex: 1; height: 12px; background: #fff; border-radius: 6px 6px 0 0; }

/* status */
.status { height: 37px; background: #111; display: flex; align-items: center; padding-left: 23px; color: #a0a0a0; text-shadow: 1px 1px 0 #000; position: relative; flex: none; }
.ms { width: 23px; height: 34px; }
.st1 { margin: 0 370px 0 22px; width: 0; }
.st2 { margin: 0 143px 0 22px; white-space: nowrap; }
.ver { position: absolute; right: 18px; color: #a0855a; font-weight: 700; }
```
